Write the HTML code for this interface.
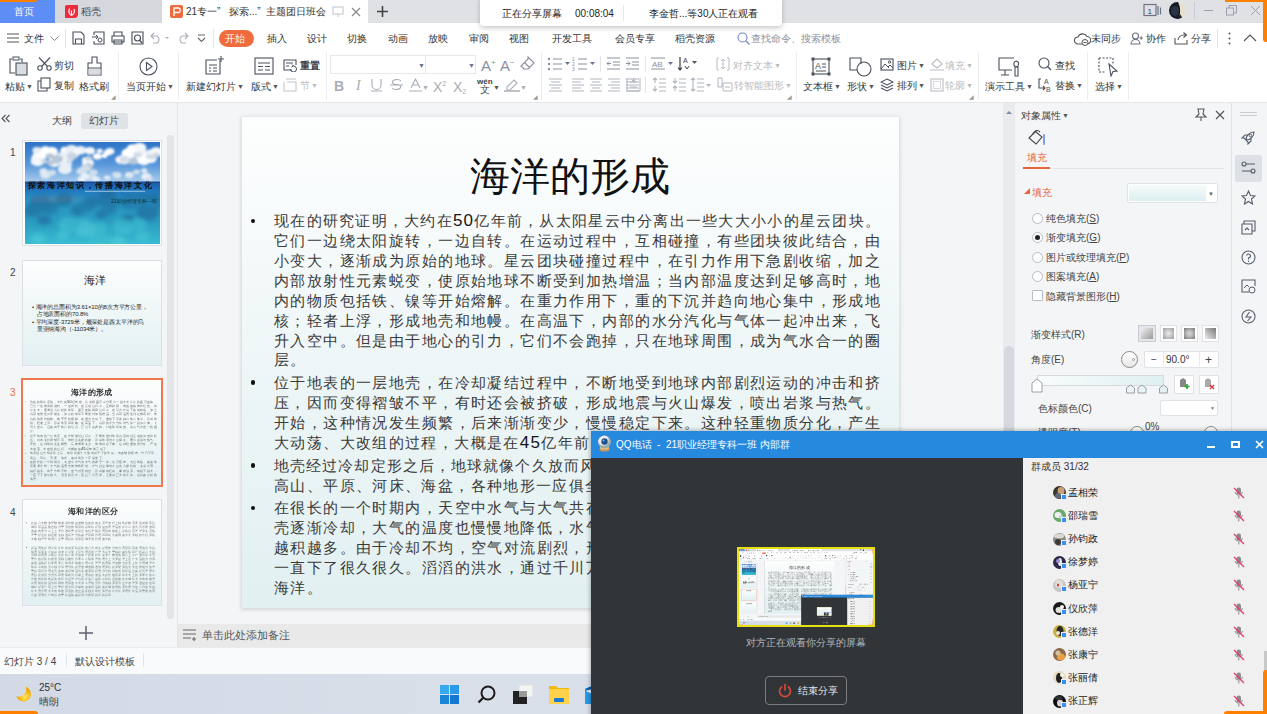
<!DOCTYPE html>
<html><head><meta charset="utf-8">
<style>
*{box-sizing:border-box;margin:0;padding:0}
html,body{width:1267px;height:714px;overflow:hidden;background:#f4f5f7;font-family:"Liberation Sans",sans-serif;color:#333}
.a{position:absolute}
.t{position:absolute;white-space:nowrap;line-height:1;font-size:10px;margin-top:1px}
.sl{margin-top:0;letter-spacing:1.1px}
.dg{font-family:'Liberation Sans',sans-serif;font-size:17px;color:#151515}
.ic{position:absolute}
.sep{position:absolute;width:1px;background:#e3e5e8}
.dd{font-size:7px;color:#555;margin-left:1px;vertical-align:1px}
.gr{color:#b9bcc2}
</style></head><body>

<!-- ===== TITLE BAR ===== -->
<div class="a" style="left:0;top:0;width:1267px;height:23px;background:#dfe1e5"></div>
<div class="a" style="left:0;top:0;width:55px;height:23px;background:#5c8ef5"></div>
<div class="t" style="left:14px;top:6px;color:#fff">首页</div>
<div class="a" style="left:55px;top:0;width:107px;height:23px;background:#d6d8dd"></div>
<svg class="ic" style="left:65px;top:5px" width="13" height="13"><path d="M2 0H13V9A4 4 0 0 1 9 13H0V2A2 2 0 0 1 2 0Z" fill="#ee2a3c"/><path d="M6.5 10.5C4 9 3.5 6 4.5 3.5M6.5 10.5C9 9 10 6.5 9 4M6.5 10.5V5.5" fill="none" stroke="#fff" stroke-width="1.1"/></svg>
<div class="t" style="left:81px;top:6px;color:#444">稻壳</div>
<div class="a" style="left:162px;top:0;width:206px;height:23px;background:#fff"></div>
<svg class="ic" style="left:170px;top:5px" width="13" height="13"><rect width="13" height="13" rx="2" fill="#ec6a3d"/><path d="M4 11V3H8.5A2.3 2.3 0 0 1 8.5 7.5H4" fill="none" stroke="#fff" stroke-width="1.3"/></svg>
<div class="t" style="left:186px;top:6px;color:#333">21专一”</div><div class="t" style="left:229px;top:6px;color:#333">探索...”</div><div class="t" style="left:266px;top:6px;color:#333">主题团日班会</div>
<svg class="ic" style="left:332px;top:6px" width="12" height="12"><rect x="1" y="1" width="10" height="7" fill="none" stroke="#c8ccd2" stroke-width="1.2"/><line x1="6" y1="8" x2="6" y2="11" stroke="#c8ccd2"/></svg>
<svg class="ic" style="left:351px;top:7px" width="10" height="10"><path d="M1 1L9 9M9 1L1 9" stroke="#888" stroke-width="1.1"/></svg>
<svg class="ic" style="left:376px;top:5px" width="13" height="13"><path d="M6.5 1V12M1 6.5H12" stroke="#444" stroke-width="1.6"/></svg>

<!-- title bar right -->
<svg class="ic" style="left:1143px;top:3px" width="19" height="14"><rect x="1" y="1.5" width="12" height="11" fill="none" stroke="#6b7385" stroke-width="1.2"/><path d="M15 3v9M17.5 4.5v7" stroke="#6b7385" stroke-width="1.2"/><text x="4.5" y="10.5" font-size="8" fill="#3d4557" font-family="Liberation Sans">1</text></svg>
<svg class="ic" style="left:1169px;top:2px" width="17" height="17"><defs><clipPath id="avc"><circle cx="8.5" cy="8.5" r="8.5"/></clipPath></defs><g clip-path="url(#avc)"><rect width="17" height="17" fill="#e6e2cc"/><path d="M0 0H9C11 4 12 9 10 17H0Z" fill="#141a26"/><ellipse cx="6" cy="9" rx="4" ry="5" fill="#2a3444"/><path d="M11 12L14 17H9Z" fill="#1a1f2a"/></g></svg>
<div class="sep" style="left:1194px;top:2px;height:17px;background:#c9ccd3"></div>
<div class="a" style="left:1204px;top:10px;width:9px;height:1px;background:#9aa1ad"></div>
<svg class="ic" style="left:1226px;top:5px" width="11" height="11"><rect x="0.5" y="3" width="7" height="7" fill="none" stroke="#9aa1ad"/><path d="M3 3V0.5H10.5V8H8" fill="none" stroke="#9aa1ad"/></svg>
<svg class="ic" style="left:1250px;top:5px" width="11" height="11"><path d="M1 1L10 10M10 1L1 10" stroke="#9aa1ad" stroke-width="1"/></svg>

<!-- ===== MENU ROW ===== -->
<div class="a" style="left:0;top:23px;width:1267px;height:80px;background:#fff"></div>
<div class="a" style="left:0;top:102px;width:1267px;height:1px;background:#e4e6ea"></div>
<svg class="ic" style="left:7px;top:33px" width="12" height="10"><path d="M0 1H12M0 5H12M0 9H12" stroke="#555" stroke-width="1.1"/></svg>
<div class="t" style="left:24px;top:33px;color:#333">文件</div>
<svg class="ic" style="left:50px;top:36px" width="9" height="6"><path d="M0.5 0.5L4.5 4.5L8.5 0.5" fill="none" stroke="#888"/></svg>
<div class="sep" style="left:65px;top:29px;height:19px"></div>
<svg class="ic" style="left:72px;top:31px" width="13" height="14"><path d="M1 1H9L12 4V13H1Z M3.5 13V8H9.5V13" fill="none" stroke="#474d59" stroke-width="1.1"/></svg>
<svg class="ic" style="left:92px;top:31px" width="13" height="14"><path d="M2 1H12V13H2V10M2 4V1" fill="none" stroke="#474d59" stroke-width="1.1"/><path d="M0 6H6M4 4L6 6L4 8" fill="none" stroke="#474d59"/><circle cx="8" cy="9" r="2" fill="none" stroke="#474d59"/></svg>
<svg class="ic" style="left:111px;top:31px" width="14" height="14"><path d="M3 5V1H11V5M1 5H13V11H1Z M3 9H11V13H3Z" fill="none" stroke="#474d59" stroke-width="1.1"/></svg>
<svg class="ic" style="left:131px;top:31px" width="13" height="14"><path d="M1 1H12V13H1Z" fill="none" stroke="#474d59" stroke-width="1.1"/><circle cx="6.5" cy="7" r="3" fill="none" stroke="#474d59" stroke-width="1.1"/><path d="M8.5 9L11 12" stroke="#474d59" stroke-width="1.2"/></svg>
<svg class="ic" style="left:150px;top:32px" width="20" height="12"><path d="M4 1L1 4L4 7M1 4H7A4 4 0 0 1 7 11H3" fill="none" stroke="#aab0ba" stroke-width="1.1"/><path d="M15 5L17 7L19 5Z" fill="#aab0ba"/></svg>
<svg class="ic" style="left:177px;top:32px" width="12" height="12"><path d="M8 1L11 4L8 7M11 4H5A4 4 0 0 0 5 11H9" fill="none" stroke="#aab0ba" stroke-width="1.1"/></svg>
<svg class="ic" style="left:197px;top:34px" width="9" height="9"><path d="M1 1H8M1 4L4.5 7.5L8 4" fill="none" stroke="#666" stroke-width="1.1"/></svg>
<div class="sep" style="left:213px;top:29px;height:19px"></div>
<div class="a" style="left:219px;top:30px;width:35px;height:17px;border-radius:9px;background:#f06c3c"></div>
<div class="t" style="left:225px;top:33px;color:#fff">开始</div>
<div class="t" style="left:267px;top:33px">插入</div>
<div class="t" style="left:307px;top:33px">设计</div>
<div class="t" style="left:347px;top:33px">切换</div>
<div class="t" style="left:388px;top:33px">动画</div>
<div class="t" style="left:428px;top:33px">放映</div>
<div class="t" style="left:469px;top:33px">审阅</div>
<div class="t" style="left:509px;top:33px">视图</div>
<div class="t" style="left:552px;top:33px">开发工具</div>
<div class="t" style="left:615px;top:33px">会员专享</div>
<div class="t" style="left:675px;top:33px">稻壳资源</div>
<svg class="ic" style="left:737px;top:32px" width="13" height="13"><circle cx="5.5" cy="5.5" r="4.5" fill="none" stroke="#6f86c6" stroke-width="1.1"/><path d="M9 9L12.5 12.5" stroke="#6f86c6" stroke-width="1.2"/></svg>
<div class="t" style="left:751px;top:33px;color:#8a90a0">查找命令、搜索模板</div>
<svg class="ic" style="left:1074px;top:32px" width="17" height="14"><path d="M4 12A3.5 3.5 0 0 1 4 5A5 5 0 0 1 13 4.5A3.5 3.5 0 0 1 13 12Z" fill="none" stroke="#555" stroke-width="1.1"/><circle cx="11" cy="10.5" r="3" fill="#fff" stroke="#555"/><path d="M9.5 10.5H12.5" stroke="#555"/></svg>
<div class="t" style="left:1091px;top:33px">未同步</div>
<svg class="ic" style="left:1130px;top:32px" width="13" height="13"><circle cx="5.5" cy="4" r="3" fill="none" stroke="#6a7080" stroke-width="1.1"/><path d="M1 12A4.5 4.5 0 0 1 10 12Z" fill="none" stroke="#6a7080" stroke-width="1.1"/><path d="M9.5 6H13M11.2 4.2V7.8" stroke="#6a7080"/></svg>
<div class="t" style="left:1146px;top:33px">协作</div>
<svg class="ic" style="left:1174px;top:31px" width="14" height="14"><path d="M1 7V13H13V9M4 9A6 6 0 0 1 10 4H12M9.5 1.5L12.5 4L9.5 6.5" fill="none" stroke="#555" stroke-width="1.1"/></svg>
<div class="t" style="left:1191px;top:33px">分享</div>
<div class="sep" style="left:1217px;top:29px;height:19px"></div>
<svg class="ic" style="left:1228px;top:32px" width="3" height="14"><circle cx="1.5" cy="1.5" r="1" fill="#555"/><circle cx="1.5" cy="6.5" r="1" fill="#555"/><circle cx="1.5" cy="11.5" r="1" fill="#555"/></svg>
<svg class="ic" style="left:1243px;top:34px" width="14" height="8"><path d="M1 7L7 1L13 7" fill="none" stroke="#555" stroke-width="1.1"/></svg>

<!-- sharing notice -->
<div class="a" style="left:480px;top:-4px;width:302px;height:30px;background:#fff;border-radius:4px;box-shadow:0 2px 5px rgba(0,0,0,.22)"></div>
<div class="t" style="left:502px;top:8px;color:#222">正在分享屏幕</div>
<div class="t" style="left:575px;top:8px;color:#222;font-size:10px">00:08:04</div>
<div class="sep" style="left:623px;top:5px;height:16px;background:#e8e8e8"></div>
<div class="t" style="left:649px;top:8px;color:#222">李金哲...等30人正在观看</div>

<!-- ===== RIBBON ===== -->
<svg class="ic" style="left:8px;top:56px" width="21" height="21"><path d="M4 3H2V17H7M12 3H14V6" fill="none" stroke="#4a505c" stroke-width="1.1"/><rect x="5" y="1" width="6" height="3" fill="none" stroke="#4a505c"/><rect x="8" y="7" width="11" height="12" fill="#d9dce1" stroke="#4a505c" stroke-width="1.1"/></svg>
<div class="t" style="left:5px;top:81px">粘贴<span class="dd">▼</span></div>
<svg class="ic" style="left:37px;top:57px" width="15" height="14"><circle cx="3" cy="11" r="2.2" fill="none" stroke="#4a505c" stroke-width="1.1"/><circle cx="12" cy="11" r="2.2" fill="none" stroke="#4a505c" stroke-width="1.1"/><path d="M4.5 9.5L13 0.5M10.5 9.5L2 0.5" stroke="#4a505c" stroke-width="1.1"/></svg>
<div class="t" style="left:54px;top:60px">剪切</div>
<svg class="ic" style="left:37px;top:77px" width="14" height="15"><rect x="4" y="1" width="9" height="10" fill="none" stroke="#4a505c" stroke-width="1.1"/><path d="M4 4H1V14H10V11" fill="none" stroke="#4a505c" stroke-width="1.1"/></svg>
<div class="t" style="left:54px;top:80px">复制</div>
<svg class="ic" style="left:86px;top:56px" width="17" height="21"><path d="M6 1H11V7H15V19H2V7H6Z" fill="none" stroke="#4a505c" stroke-width="1.1"/><rect x="2.5" y="13" width="12" height="5.5" fill="#d9dce1"/><path d="M2 12H15" stroke="#4a505c"/></svg>
<div class="t" style="left:79px;top:81px">格式刷</div>
<div class="t" style="left:111px;top:93px;font-size:6px;color:#999">◢</div>
<div class="sep" style="left:118px;top:52px;height:48px;background:#eceef1"></div>
<svg class="ic" style="left:139px;top:57px" width="19" height="19"><circle cx="9.5" cy="9.5" r="8.5" fill="none" stroke="#4a505c" stroke-width="1.1"/><path d="M7.5 5.5L13 9.5L7.5 13.5Z" fill="none" stroke="#4a505c" stroke-width="1.1"/></svg>
<div class="t" style="left:126px;top:81px">当页开始<span class="dd">▼</span></div>
<div class="sep" style="left:178px;top:52px;height:48px;background:#eceef1"></div>
<svg class="ic" style="left:204px;top:56px" width="21" height="20"><path d="M16 4V18H2V4H13" fill="none" stroke="#4a505c" stroke-width="1.1"/><path d="M17 0V6M14 3H20" stroke="#4a505c" stroke-width="1.1"/><path d="M5 9H13M5 12H7M9 12H13M5 15H7M9 15H13" stroke="#4a505c" stroke-width="1.1"/></svg>
<div class="t" style="left:186px;top:81px">新建幻灯片<span class="dd">▼</span></div>
<svg class="ic" style="left:254px;top:57px" width="20" height="18"><rect x="1" y="1" width="18" height="16" fill="none" stroke="#4a505c" stroke-width="1.1"/><path d="M4 6H16M4 9.5H9M11 9.5H16M4 13H9M11 13H16" stroke="#4a505c" stroke-width="1.1"/></svg>
<div class="t" style="left:251px;top:81px">版式<span class="dd">▼</span></div>
<svg class="ic" style="left:283px;top:59px" width="15" height="13"><path d="M9 11H1V1H13V6" fill="none" stroke="#4a505c" stroke-width="1.1"/><path d="M3 4H10M3 7H6" stroke="#4a505c"/><path d="M7.5 10A3 3 0 1 0 10.5 7M9 5.5L10.5 7L8.5 8" fill="none" stroke="#4a505c"/></svg>
<div class="t" style="left:300px;top:60px;font-weight:bold;color:#3a3f4a">重置</div>
<svg class="ic" style="left:283px;top:78px" width="15" height="14"><path d="M3 1H13M1 4V13H13V4H4" fill="none" stroke="#c0c4cb" stroke-width="1.1"/></svg>
<div class="t gr" style="left:300px;top:80px">节<span class="dd" style="color:#bbb">▼</span></div>
<div class="sep" style="left:326px;top:52px;height:48px;background:#eceef1"></div>
<div class="a" style="left:330px;top:55px;width:146px;height:19px;border:1px solid #e6e8eb;background:#fff"></div>
<div class="sep" style="left:425px;top:56px;height:17px;background:#e6e8eb"></div>
<div class="t" style="left:418px;top:61px;font-size:7px;color:#6a7390">▼</div>
<div class="t" style="left:468px;top:61px;font-size:7px;color:#6a7390">▼</div>
<div class="t" style="left:481px;top:57px;font-size:15px;color:#8a909c;font-weight:normal">A<span style="font-size:8px;vertical-align:6px">+</span></div>
<div class="t" style="left:500px;top:57px;font-size:15px;color:#8a909c">A<span style="font-size:8px;vertical-align:6px">−</span></div>
<svg class="ic" style="left:520px;top:56px" width="15" height="15"><path d="M8 1L14 7L8 13H4L1 10L8 3Z M4.5 6.5L10 12" fill="none" stroke="#8a909c" stroke-width="1.1"/></svg>
<div class="t" style="left:334px;top:78px;font-size:14px;font-weight:bold;color:#a8adb6">B</div>
<div class="t" style="left:356px;top:78px;font-size:14px;font-style:italic;color:#a8adb6;font-family:'Liberation Serif',serif">I</div>
<svg class="ic" style="left:370px;top:78px" width="13" height="14"><path d="M2 1V7A4.5 4.5 0 0 0 11 7V1M1 13H12" fill="none" stroke="#a8adb6" stroke-width="1.1"/></svg>
<svg class="ic" style="left:390px;top:78px" width="13" height="14"><path d="M11 3A4.5 2.5 0 1 0 6.5 6.5A4.5 2.5 0 1 1 2 10M0 7H13" fill="none" stroke="#a8adb6" stroke-width="1.1"/></svg>
<svg class="ic" style="left:409px;top:78px" width="13" height="14"><path d="M2 10L6.5 1L11 10M3.5 7H9.5M0 13H13" fill="none" stroke="#a8adb6" stroke-width="1.1"/></svg>
<div class="t" style="left:422px;top:83px;font-size:7px;color:#a8adb6">▼</div>
<div class="t" style="left:433px;top:79px;font-size:14px;color:#a8adb6">X<span style="font-size:7px;vertical-align:6px">2</span></div>
<div class="t" style="left:453px;top:79px;font-size:14px;color:#a8adb6">X<span style="font-size:7px;vertical-align:-2px">2</span></div>
<div class="t" style="left:477px;top:77px;font-size:8px;color:#3a3f4a;font-weight:bold">wén</div>
<div class="t" style="left:480px;top:84px;font-size:10px;color:#3a3f4a">文</div>
<div class="t" style="left:493px;top:83px;font-size:7px;color:#555">▼</div>
<svg class="ic" style="left:504px;top:78px" width="16" height="14"><path d="M3 9L10 2L13 5L6 12H3Z" fill="none" stroke="#a8adb6" stroke-width="1.1"/><path d="M0 13H16" stroke="#a8adb6" stroke-width="1.5"/></svg>
<div class="t" style="left:520px;top:83px;font-size:7px;color:#a8adb6">▼</div>
<div class="t" style="left:533px;top:93px;font-size:6px;color:#999">◢</div>
<div class="sep" style="left:541px;top:52px;height:48px;background:#eceef1"></div>
<svg class="ic" style="left:547px;top:57px" width="24" height="14"><g fill="#8a909c"><circle cx="2" cy="2" r="1.2"/><circle cx="2" cy="7" r="1.2"/><circle cx="2" cy="12" r="1.2"/></g><path d="M6 2H15M6 7H15M6 12H15" stroke="#8a909c" stroke-width="1.1"/><path d="M18 5L20.5 8L23 5Z" fill="#6a7390"/></svg>
<svg class="ic" style="left:572px;top:56px" width="24" height="15"><text x="0" y="5" font-size="5" fill="#8a909c">1</text><text x="0" y="10" font-size="5" fill="#8a909c">2</text><text x="0" y="15" font-size="5" fill="#8a909c">3</text><path d="M6 3H15M6 8H15M6 13H15" stroke="#8a909c" stroke-width="1.1"/><path d="M18 6L20.5 9L23 6Z" fill="#6a7390"/></svg>
<div class="sep" style="left:600px;top:56px;height:16px"></div>
<svg class="ic" style="left:606px;top:57px" width="15" height="13"><path d="M1 1H14M7 5H14M7 8H14M1 12H14M5 6.5H1M3 4.5L1 6.5L3 8.5" fill="none" stroke="#8a909c" stroke-width="1"/></svg>
<svg class="ic" style="left:625px;top:57px" width="15" height="13"><path d="M1 1H14M7 5H14M7 8H14M1 12H14M1 6.5H5M3 4.5L5 6.5L3 8.5" fill="none" stroke="#8a909c" stroke-width="1"/></svg>
<div class="sep" style="left:645px;top:56px;height:16px"></div>
<svg class="ic" style="left:651px;top:57px" width="24" height="13"><path d="M0 1H14M0 12H14" stroke="#8a909c"/><text x="1" y="10" font-size="8" fill="#8a909c" font-family="Liberation Sans">AB</text><path d="M17 5L19.5 8L22 5Z" fill="#6a7390"/></svg>
<svg class="ic" style="left:677px;top:56px" width="22" height="15"><path d="M3 1V14M1 11.5L3 14L5 11.5" fill="none" stroke="#3a3f4a" stroke-width="1.2"/><text x="6" y="7" font-size="7" fill="#3a3f4a" font-family="Liberation Sans">A</text><path d="M8 10L10 13L12 10" fill="none" stroke="#3a3f4a"/><path d="M15 5L17.5 8L20 5Z" fill="#555"/></svg>
<svg class="ic" style="left:716px;top:57px" width="14" height="14"><path d="M3 1H1V13H3M11 1H13V13H11M7 2V12M5 4L7 2L9 4M5 10L7 12L9 10" fill="none" stroke="#b9bcc2" stroke-width="1"/></svg>
<div class="t gr" style="left:733px;top:60px">对齐文本<span class="dd" style="color:#bbb">▼</span></div>
<svg class="ic" style="left:548px;top:77px" width="100" height="15"><g stroke="#b0b5bd" stroke-width="1.1"><path d="M1 2H14M3 5H12M1 8H14M3 11H12M1 14H14"/><path d="M24 2H36M24 5H33M24 8H36M24 11H33M24 14H36"/><path d="M42 2H54M44 5H52M42 8H54M44 11H52M42 14H54"/><path d="M60 2H72M63 5H72M60 8H72M63 11H72M60 14H72"/><path d="M78 2H91M78 5H91M78 8H91M78 11H91M78 14H91"/></g></svg>
<svg class="ic" style="left:626px;top:77px" width="15" height="15"><path d="M1 1V14M14 1V14M1 14H14M4 5H11M4 10H11M7.5 1V4M5.5 2.5L7.5 4.5L9.5 2.5" fill="none" stroke="#b0b5bd" stroke-width="1"/></svg>
<div class="sep" style="left:645px;top:77px;height:16px"></div>
<svg class="ic" style="left:652px;top:77px" width="60" height="15"><g stroke="#b0b5bd" stroke-width="1.1" fill="none"><path d="M7 2H14M7 6H14M7 10H14M7 14H14M3 1V6M1 3L3 1L5 3M3 9V14M1 12L3 14L5 12"/><path d="M27 2H34M27 6H34M27 10H34M27 14H34M23 1V6M21 4L23 6L25 4M23 9V14M21 11L23 9L25 11"/><path d="M45 2H52M45 6H52M45 10H52M45 14H52M41 1V14M39 3L41 1L43 3M39 12L41 14L43 12"/></g><path d="M54 7L56.5 10L59 7Z" fill="#b0b5bd"/></svg>
<svg class="ic" style="left:717px;top:77px" width="16" height="15"><path d="M1 1H5V10H1Z" fill="none" stroke="#b0b5bd"/><rect x="6" y="6" width="9" height="8" rx="1" fill="none" stroke="#b0b5bd"/><path d="M8 10H13" stroke="#b0b5bd"/></svg>
<div class="t gr" style="left:734px;top:80px">转智能图形<span class="dd" style="color:#bbb">▼</span></div>
<div class="t" style="left:787px;top:93px;font-size:6px;color:#999">◢</div>
<div class="sep" style="left:796px;top:52px;height:48px;background:#eceef1"></div>
<svg class="ic" style="left:811px;top:57px" width="20" height="19"><rect x="2" y="2" width="16" height="15" fill="none" stroke="#4a505c" stroke-width="1.1"/><g fill="#4a505c"><rect x="0.5" y="0.5" width="3" height="3"/><rect x="16.5" y="0.5" width="3" height="3"/><rect x="0.5" y="15.5" width="3" height="3"/><rect x="16.5" y="15.5" width="3" height="3"/></g><text x="4" y="12" font-size="9" fill="#4a505c" font-family="Liberation Sans">A</text><path d="M11 7H15M11 10H15M5 14H15" stroke="#4a505c"/></svg>
<div class="t" style="left:803px;top:81px">文本框<span class="dd">▼</span></div>
<svg class="ic" style="left:849px;top:57px" width="23" height="20"><path d="M12 7V1H1V13H8" fill="none" stroke="#4a505c" stroke-width="1.1"/><circle cx="15" cy="12" r="7" fill="none" stroke="#4a505c" stroke-width="1.1"/></svg>
<div class="t" style="left:847px;top:81px">形状<span class="dd">▼</span></div>
<svg class="ic" style="left:880px;top:58px" width="14" height="13"><rect x="1" y="1" width="12" height="11" fill="none" stroke="#4a505c" stroke-width="1.1"/><path d="M1 11L5 6L9 10M8 9L10 7L13 10" fill="none" stroke="#4a505c"/><circle cx="9.5" cy="4" r="1.2" fill="none" stroke="#4a505c"/></svg>
<div class="t" style="left:897px;top:60px">图片<span class="dd">▼</span></div>
<svg class="ic" style="left:930px;top:57px" width="14" height="14"><path d="M2 7L7 2L12 7L7 11Z M0 13H14" fill="none" stroke="#b9bcc2" stroke-width="1.1"/></svg>
<div class="t gr" style="left:945px;top:60px">填充<span class="dd" style="color:#bbb">▼</span></div>
<svg class="ic" style="left:880px;top:78px" width="14" height="14"><path d="M7 1L13 4L7 7L1 4Z M1 7L7 10L13 7M1 10L7 13L13 10" fill="none" stroke="#4a505c" stroke-width="1.1"/></svg>
<div class="t" style="left:897px;top:80px">排列<span class="dd">▼</span></div>
<svg class="ic" style="left:930px;top:78px" width="14" height="14"><rect x="1" y="1" width="12" height="12" fill="none" stroke="#b9bcc2" stroke-width="1.1"/><rect x="3.5" y="3.5" width="7" height="7" fill="none" stroke="#d6d8dc"/></svg>
<div class="t gr" style="left:945px;top:80px">轮廓<span class="dd" style="color:#bbb">▼</span></div>
<div class="t" style="left:969px;top:93px;font-size:6px;color:#999">◢</div>
<div class="sep" style="left:978px;top:52px;height:48px;background:#eceef1"></div>
<svg class="ic" style="left:998px;top:57px" width="23" height="20"><path d="M16 1H1V13H14M7 13V18M3 18H11" fill="none" stroke="#4a505c" stroke-width="1.1"/><path d="M18 4A3 3 0 0 0 20 10V19H17V10A3 3 0 0 0 18 4" fill="none" stroke="#4a505c" stroke-width="1.1"/></svg>
<div class="t" style="left:985px;top:81px">演示工具<span class="dd">▼</span></div>
<svg class="ic" style="left:1038px;top:57px" width="14" height="14"><circle cx="6" cy="6" r="5" fill="none" stroke="#4a505c" stroke-width="1.1"/><path d="M9.5 9.5L13 13" stroke="#4a505c" stroke-width="1.3"/></svg>
<div class="t" style="left:1055px;top:60px">查找</div>
<svg class="ic" style="left:1038px;top:77px" width="15" height="15"><path d="M3 2H1V11H7M5 9L7 11L5 13" fill="none" stroke="#4a505c" stroke-width="1.1"/><text x="6" y="7" font-size="7" fill="#4a505c" font-family="Liberation Sans">A</text><text x="8" y="14.5" font-size="7" fill="#4a505c" font-family="Liberation Sans">B</text></svg>
<div class="t" style="left:1055px;top:80px">替换<span class="dd">▼</span></div>
<div class="sep" style="left:1087px;top:52px;height:48px;background:#eceef1"></div>
<svg class="ic" style="left:1098px;top:57px" width="21" height="20"><path d="M1 1H15V8M1 1V15H8" fill="none" stroke="#4a505c" stroke-width="1.1" stroke-dasharray="2 1.5"/><path d="M11 7L19 14L15 14.5L13 19Z" fill="none" stroke="#4a505c" stroke-width="1.1"/></svg>
<div class="t" style="left:1095px;top:81px">选择<span class="dd">▼</span></div>
<div class="sep" style="left:1128px;top:52px;height:48px;background:#eceef1"></div>

<!-- ===== LEFT PANEL ===== -->
<div class="a" style="left:177px;top:103px;width:1px;height:544px;background:#e2e4e8"></div>
<svg class="ic" style="left:1px;top:114px" width="10" height="9"><path d="M4.5 1L1 4.5L4.5 8M8.5 1L5 4.5L8.5 8" fill="none" stroke="#555" stroke-width="1.1"/></svg>
<div class="t" style="left:52px;top:115px;color:#444">大纲</div>
<div class="a" style="left:81px;top:113px;width:47px;height:16px;border-radius:3px;background:#dfe2e7"></div>
<div class="t" style="left:89px;top:115px;color:#444">幻灯片</div>
<div class="a" style="left:167px;top:135px;width:7px;height:484px;border-radius:3px;background:#e2e4e8"></div>

<div class="t" style="left:10px;top:147px;font-size:10px;color:#444">1</div>
<div class="a" style="left:22px;top:140px;width:140px;height:106px;border:1px solid #dcdfe3;background:#fff"></div>
<svg class="ic" style="left:25px;top:142px" width="135" height="102" viewBox="0 0 135 102">
<defs>
<linearGradient id="sky" x1="0" y1="0" x2="0" y2="1"><stop offset="0" stop-color="#2c74c8"/><stop offset=".55" stop-color="#5696da"/><stop offset="1" stop-color="#a8cbec"/></linearGradient>
<linearGradient id="sea" x1="0" y1="0" x2="0" y2="1"><stop offset="0" stop-color="#1a58a8"/><stop offset=".12" stop-color="#2174bc"/><stop offset=".3" stop-color="#2a98c8"/><stop offset=".65" stop-color="#2a9cc0"/><stop offset="1" stop-color="#38bcd2"/></linearGradient>
<filter id="b1" x="-30%" y="-30%" width="160%" height="160%"><feGaussianBlur stdDeviation="1.1"/></filter>
<filter id="b2" x="-30%" y="-30%" width="160%" height="160%"><feGaussianBlur stdDeviation="2.2"/></filter>
</defs>
<rect width="135" height="40" fill="url(#sky)"/>
<g filter="url(#b1)"><ellipse cx="26.8" cy="9.6" rx="6.2" ry="4.5" fill="#ffffff"/><ellipse cx="55.6" cy="8.3" rx="5.9" ry="4.2" fill="#e9eff7"/><ellipse cx="20.5" cy="8.1" rx="5.3" ry="3.8" fill="#ffffff"/><ellipse cx="13.3" cy="16.2" rx="7.0" ry="5.0" fill="#ffffff"/><ellipse cx="63.0" cy="21.1" rx="5.9" ry="4.2" fill="#ffffff"/><ellipse cx="41.5" cy="15.5" rx="7.6" ry="5.4" fill="#ffffff"/><ellipse cx="40.3" cy="9.2" rx="5.3" ry="3.8" fill="#e9eff7"/><ellipse cx="14.8" cy="13.4" rx="6.9" ry="4.9" fill="#ffffff"/><ellipse cx="14.0" cy="19.7" rx="4.3" ry="3.1" fill="#ffffff"/><ellipse cx="39.8" cy="7.5" rx="3.8" ry="2.7" fill="#ffffff"/><ellipse cx="36.8" cy="18.8" rx="6.8" ry="4.8" fill="#f4f7fb"/><ellipse cx="42.0" cy="16.9" rx="4.8" ry="3.4" fill="#ffffff"/><ellipse cx="48.5" cy="11.9" rx="5.9" ry="4.2" fill="#e9eff7"/><ellipse cx="36.7" cy="14.2" rx="5.4" ry="3.8" fill="#e9eff7"/><ellipse cx="64.9" cy="8.8" rx="5.3" ry="3.8" fill="#f4f7fb"/><ellipse cx="16.8" cy="17.7" rx="3.7" ry="2.6" fill="#e9eff7"/><ellipse cx="12.5" cy="19.4" rx="6.8" ry="4.9" fill="#f4f7fb"/><ellipse cx="27.7" cy="14.4" rx="5.6" ry="4.0" fill="#f4f7fb"/><ellipse cx="12.0" cy="8.2" rx="4.6" ry="3.3" fill="#e9eff7"/><ellipse cx="46.5" cy="7.5" rx="6.4" ry="4.6" fill="#e9eff7"/><ellipse cx="41.5" cy="22.3" rx="5.4" ry="3.8" fill="#e9eff7"/><ellipse cx="30.4" cy="22.0" rx="3.6" ry="2.6" fill="#f4f7fb"/><ellipse cx="28.6" cy="20.7" rx="5.6" ry="4.0" fill="#ffffff"/><ellipse cx="52.6" cy="9.1" rx="4.5" ry="3.2" fill="#f4f7fb"/><ellipse cx="61.2" cy="17.9" rx="4.2" ry="3.0" fill="#f4f7fb"/><ellipse cx="39.9" cy="27.2" rx="6.9" ry="5.0" fill="#e9eff7"/><ellipse cx="25.6" cy="20.6" rx="3.8" ry="2.7" fill="#b8c6d8"/><ellipse cx="63.6" cy="16.4" rx="3.3" ry="2.4" fill="#c8d4e2"/><ellipse cx="46.9" cy="14.2" rx="5.1" ry="3.7" fill="#c8d4e2"/><ellipse cx="24.7" cy="14.1" rx="4.0" ry="2.8" fill="#b8c6d8"/><ellipse cx="44.1" cy="19.1" rx="3.2" ry="2.3" fill="#d4dde8"/><ellipse cx="63.2" cy="24.5" rx="4.9" ry="3.5" fill="#b8c6d8"/><ellipse cx="60.4" cy="26.5" rx="5.2" ry="3.7" fill="#d4dde8"/><ellipse cx="32.0" cy="20.4" rx="3.1" ry="2.2" fill="#d4dde8"/><ellipse cx="32.4" cy="17.0" rx="5.6" ry="4.0" fill="#b8c6d8"/><ellipse cx="19.1" cy="19.4" rx="2.9" ry="2.1" fill="#c8d4e2"/><ellipse cx="116.5" cy="11.7" rx="6.8" ry="4.9" fill="#e9eff7"/><ellipse cx="96.0" cy="17.7" rx="5.6" ry="4.0" fill="#ffffff"/><ellipse cx="119.1" cy="19.2" rx="5.6" ry="4.0" fill="#f4f7fb"/><ellipse cx="99.7" cy="17.3" rx="7.0" ry="5.0" fill="#f4f7fb"/><ellipse cx="113.3" cy="7.6" rx="4.0" ry="2.9" fill="#e9eff7"/><ellipse cx="108.0" cy="6.8" rx="6.4" ry="4.6" fill="#ffffff"/><ellipse cx="114.6" cy="5.7" rx="6.8" ry="4.9" fill="#f4f7fb"/><ellipse cx="100.6" cy="11.8" rx="3.6" ry="2.6" fill="#e9eff7"/><ellipse cx="106.3" cy="13.6" rx="3.8" ry="2.7" fill="#f4f7fb"/><ellipse cx="114.7" cy="18.3" rx="4.7" ry="3.4" fill="#ffffff"/><ellipse cx="115.2" cy="16.0" rx="4.7" ry="3.3" fill="#ffffff"/><ellipse cx="118.3" cy="16.2" rx="6.2" ry="4.4" fill="#ffffff"/><ellipse cx="125.6" cy="16.7" rx="6.1" ry="4.3" fill="#ffffff"/><ellipse cx="102.6" cy="10.9" rx="6.1" ry="4.3" fill="#ffffff"/><ellipse cx="125.0" cy="10.5" rx="4.2" ry="3.0" fill="#e9eff7"/><ellipse cx="131.3" cy="10.1" rx="6.8" ry="4.8" fill="#f4f7fb"/><ellipse cx="131.3" cy="13.1" rx="3.3" ry="2.3" fill="#c8d4e2"/><ellipse cx="113.4" cy="12.7" rx="3.8" ry="2.7" fill="#d4dde8"/><ellipse cx="127.1" cy="14.7" rx="4.2" ry="3.0" fill="#d4dde8"/><ellipse cx="99.1" cy="17.2" rx="4.7" ry="3.4" fill="#d4dde8"/><ellipse cx="123.8" cy="14.7" rx="3.2" ry="2.3" fill="#d4dde8"/><ellipse cx="108.3" cy="19.2" rx="4.8" ry="3.5" fill="#b8c6d8"/><ellipse cx="79.4" cy="13.9" rx="3.0" ry="2.1" fill="#ffffff"/><ellipse cx="74.7" cy="9.0" rx="3.1" ry="2.2" fill="#f4f7fb"/><ellipse cx="84.9" cy="9.2" rx="4.5" ry="3.2" fill="#f4f7fb"/><ellipse cx="82.5" cy="10.8" rx="4.0" ry="2.8" fill="#ffffff"/><ellipse cx="72.3" cy="14.4" rx="4.3" ry="3.1" fill="#ffffff"/><ellipse cx="71.1" cy="37.3" rx="4.0" ry="2.9" fill="#dfe9f4"/><ellipse cx="111.5" cy="30.1" rx="3.5" ry="2.5" fill="#cfdff0"/><ellipse cx="67.7" cy="35.6" rx="3.7" ry="2.7" fill="#e8f0f8"/><ellipse cx="56.6" cy="29.3" rx="5.3" ry="3.8" fill="#cfdff0"/><ellipse cx="121.2" cy="34.6" rx="5.1" ry="3.6" fill="#e8f0f8"/><ellipse cx="56.8" cy="37.2" rx="4.2" ry="3.0" fill="#e8f0f8"/><ellipse cx="20.5" cy="33.1" rx="5.2" ry="3.7" fill="#dfe9f4"/><ellipse cx="82.2" cy="35.8" rx="3.2" ry="2.3" fill="#dfe9f4"/><ellipse cx="63.9" cy="35.3" rx="4.4" ry="3.1" fill="#cfdff0"/><ellipse cx="92.1" cy="33.3" rx="4.2" ry="3.0" fill="#dfe9f4"/><ellipse cx="119.2" cy="28.6" rx="3.3" ry="2.4" fill="#dfe9f4"/><ellipse cx="104.3" cy="33.1" rx="4.4" ry="3.1" fill="#dfe9f4"/><ellipse cx="59.8" cy="34.1" rx="4.2" ry="3.0" fill="#e8f0f8"/><ellipse cx="26.9" cy="30.8" rx="4.2" ry="3.0" fill="#cfdff0"/><ellipse cx="68.5" cy="30.5" rx="4.3" ry="3.0" fill="#cfdff0"/><ellipse cx="124.6" cy="36.9" rx="3.4" ry="2.4" fill="#cfdff0"/><ellipse cx="18.5" cy="29.2" rx="4.0" ry="2.9" fill="#dfe9f4"/><ellipse cx="90.6" cy="32.3" rx="3.4" ry="2.4" fill="#cfdff0"/></g>
<rect y="40" width="135" height="62" fill="url(#sea)"/>
<rect y="39.5" width="135" height="1.5" fill="#1a4a92"/>
<g filter="url(#b2)" opacity=".55"><ellipse cx="103.0" cy="77.4" rx="6.7" ry="4.8" fill="#185a88"/><ellipse cx="85.4" cy="64.2" rx="7.4" ry="5.3" fill="#1a5f90"/><ellipse cx="125.9" cy="60.5" rx="12.3" ry="8.8" fill="#1f6a9a"/><ellipse cx="115.6" cy="59.1" rx="10.3" ry="7.3" fill="#1a5f90"/><ellipse cx="25.2" cy="65.8" rx="9.2" ry="6.6" fill="#1f6a9a"/><ellipse cx="57.7" cy="63.9" rx="6.2" ry="4.5" fill="#1f6a9a"/><ellipse cx="7.4" cy="68.9" rx="8.7" ry="6.2" fill="#1a5f90"/><ellipse cx="53.0" cy="67.9" rx="7.7" ry="5.5" fill="#1a5f90"/><ellipse cx="19.1" cy="78.0" rx="7.2" ry="5.1" fill="#1a5f90"/><ellipse cx="15.5" cy="61.8" rx="11.9" ry="8.5" fill="#1a5f90"/><ellipse cx="38.8" cy="58.2" rx="8.6" ry="6.1" fill="#185a88"/><ellipse cx="107.4" cy="61.5" rx="6.6" ry="4.7" fill="#185a88"/><ellipse cx="76.3" cy="72.5" rx="6.2" ry="4.4" fill="#1a5f90"/><ellipse cx="104.9" cy="59.6" rx="11.9" ry="8.5" fill="#1f6a9a"/><ellipse cx="122.3" cy="70.9" rx="11.2" ry="8.0" fill="#1a5f90"/><ellipse cx="81.0" cy="60.6" rx="7.5" ry="5.3" fill="#1a5f90"/><ellipse cx="61.7" cy="63.5" rx="9.5" ry="6.8" fill="#1f6a9a"/><ellipse cx="82.7" cy="56.1" rx="10.6" ry="7.5" fill="#1a5f90"/><ellipse cx="126.2" cy="61.5" rx="6.9" ry="4.9" fill="#1f6a9a"/><ellipse cx="83.6" cy="68.3" rx="7.0" ry="5.0" fill="#1f6a9a"/><ellipse cx="67.5" cy="59.4" rx="8.0" ry="5.7" fill="#1a5f90"/><ellipse cx="129.3" cy="55.9" rx="5.7" ry="4.1" fill="#185a88"/></g>
<g filter="url(#b2)" opacity=".6"><ellipse cx="74.4" cy="85.4" rx="8.3" ry="5.9" fill="#3fbfd2"/><ellipse cx="14.3" cy="96.7" rx="8.0" ry="5.7" fill="#3fbfd2"/><ellipse cx="73.7" cy="98.0" rx="11.0" ry="7.9" fill="#3fbfd2"/><ellipse cx="92.8" cy="99.7" rx="7.5" ry="5.4" fill="#52cedc"/><ellipse cx="98.4" cy="84.5" rx="11.1" ry="8.0" fill="#46c6d8"/><ellipse cx="113.0" cy="82.3" rx="9.1" ry="6.5" fill="#3fbfd2"/><ellipse cx="58.1" cy="83.0" rx="9.3" ry="6.7" fill="#3fbfd2"/><ellipse cx="117.5" cy="94.1" rx="7.2" ry="5.1" fill="#46c6d8"/><ellipse cx="93.5" cy="82.8" rx="6.6" ry="4.7" fill="#3fbfd2"/><ellipse cx="60.2" cy="86.7" rx="11.0" ry="7.8" fill="#52cedc"/><ellipse cx="43.7" cy="82.6" rx="10.5" ry="7.5" fill="#46c6d8"/><ellipse cx="48.1" cy="82.0" rx="7.7" ry="5.5" fill="#3fbfd2"/><ellipse cx="37.7" cy="93.8" rx="7.0" ry="5.0" fill="#46c6d8"/><ellipse cx="12.3" cy="96.7" rx="6.4" ry="4.6" fill="#52cedc"/></g>
<ellipse cx="30" cy="57" rx="28" ry="3" fill="#8a7a90" opacity=".3" filter="url(#b2)"/>
<path d="M60 49.3H120" stroke="#eef8fa" stroke-width=".8" opacity=".75"/>
<text x="2.5" y="46" font-size="8.3" font-weight="bold" fill="#101010" font-family="Liberation Serif,serif" letter-spacing="1.7">探索海洋知识，传播海洋文化</text>
<text x="86" y="61" font-size="5.2" fill="#0e2a30" font-family="Liberation Sans,sans-serif">21职业经理专科一班</text>
</svg>

<div class="t" style="left:10px;top:267px;font-size:10px;color:#444">2</div>
<div class="a" style="left:22px;top:260px;width:140px;height:106px;border:1px solid #dcdfe3;background:linear-gradient(#fcfdfd,#e2f0f1)"></div>
<div class="t" style="left:84px;top:274px;font-size:11px;color:#222">海洋</div>
<div class="a" style="left:32px;top:303.5px;font-size:6px;line-height:7.6px;color:#222;white-space:nowrap;letter-spacing:-.12px">• 海洋的总面积为3.61×10的8次方平方公里，<br>&nbsp;&nbsp;&nbsp;占地表面积的70.8%<br>• 平均深度-3729米，最深处是西太平洋的马<br>&nbsp;&nbsp;&nbsp;里亚纳海沟（-11034米）。</div>

<div class="t" style="left:10px;top:387px;font-size:10px;color:#e8703f">3</div>
<div class="a" style="left:21px;top:378px;width:142px;height:109px;border:2px solid #f07850;background:linear-gradient(#fcfdfd,#e2f0f1)"></div>

<div class="t" style="left:10px;top:507px;font-size:10px;color:#444">4</div>
<div class="a" style="left:22px;top:499px;width:140px;height:107px;border:1px solid #dcdfe3;background:linear-gradient(#fcfdfd,#e2f0f1)"></div>
<div class="a" style="left:23px;top:380px;width:657px;height:491px;transform-origin:0 0;transform:scale(0.2100);overflow:hidden">
<div class="t" style="left:228px;top:39px;font-size:40px;color:#222;font-weight:bold;font-family:'Liberation Serif',serif">海洋的形成</div>
<div class="a" style="left:8.5px;top:101.9px;width:4.4px;height:4.4px;border-radius:50%;background:#777"></div>
<div class="t sl" style="left:32px;top:94.1px;height:20px;line-height:20px;font-size:15.3px;color:#6a6a6a;font-family:'Liberation Serif',serif;width:607px;text-align:justify;text-align-last:justify;">现在的研究证明，大约在<span class=dg>50</span>亿年前，从太阳星云中分离出一些大大小小的星云团块。</div>
<div class="t sl" style="left:32px;top:114.0px;height:20px;line-height:20px;font-size:15.3px;color:#6a6a6a;font-family:'Liberation Serif',serif;width:607px;text-align:justify;text-align-last:justify;">它们一边绕太阳旋转，一边自转。在运动过程中，互相碰撞，有些团块彼此结合，由</div>
<div class="t sl" style="left:32px;top:133.9px;height:20px;line-height:20px;font-size:15.3px;color:#6a6a6a;font-family:'Liberation Serif',serif;width:607px;text-align:justify;text-align-last:justify;">小变大，逐渐成为原始的地球。星云团块碰撞过程中，在引力作用下急剧收缩，加之</div>
<div class="t sl" style="left:32px;top:153.8px;height:20px;line-height:20px;font-size:15.3px;color:#6a6a6a;font-family:'Liberation Serif',serif;width:607px;text-align:justify;text-align-last:justify;">内部放射性元素蜕变，使原始地球不断受到加热增温；当内部温度达到足够高时，地</div>
<div class="t sl" style="left:32px;top:173.7px;height:20px;line-height:20px;font-size:15.3px;color:#6a6a6a;font-family:'Liberation Serif',serif;width:607px;text-align:justify;text-align-last:justify;">内的物质包括铁、镍等开始熔解。在重力作用下，重的下沉并趋向地心集中，形成地</div>
<div class="t sl" style="left:32px;top:193.6px;height:20px;line-height:20px;font-size:15.3px;color:#6a6a6a;font-family:'Liberation Serif',serif;width:607px;text-align:justify;text-align-last:justify;">核；轻者上浮，形成地壳和地幔。在高温下，内部的水分汽化与气体一起冲出来，飞</div>
<div class="t sl" style="left:32px;top:213.5px;height:20px;line-height:20px;font-size:15.3px;color:#6a6a6a;font-family:'Liberation Serif',serif;width:607px;text-align:justify;text-align-last:justify;">升入空中。但是由于地心的引力，它们不会跑掉，只在地球周围，成为气水合一的圈</div>
<div class="t sl" style="left:32px;top:233.4px;height:20px;line-height:20px;font-size:15.3px;color:#6a6a6a;font-family:'Liberation Serif',serif;letter-spacing:1.38px;">层。</div>
<div class="a" style="left:8.5px;top:263.3px;width:4.4px;height:4.4px;border-radius:50%;background:#777"></div>
<div class="t sl" style="left:32px;top:255.5px;height:20px;line-height:20px;font-size:15.3px;color:#6a6a6a;font-family:'Liberation Serif',serif;width:607px;text-align:justify;text-align-last:justify;">位于地表的一层地壳，在冷却凝结过程中，不断地受到地球内部剧烈运动的冲击和挤</div>
<div class="t sl" style="left:32px;top:275.5px;height:20px;line-height:20px;font-size:15.3px;color:#6a6a6a;font-family:'Liberation Serif',serif;width:607px;text-align:justify;text-align-last:justify;">压，因而变得褶皱不平，有时还会被挤破，形成地震与火山爆发，喷出岩浆与热气。</div>
<div class="t sl" style="left:32px;top:295.5px;height:20px;line-height:20px;font-size:15.3px;color:#6a6a6a;font-family:'Liberation Serif',serif;width:607px;text-align:justify;text-align-last:justify;">开始，这种情况发生频繁，后来渐渐变少，慢慢稳定下来。这种轻重物质分化，产生</div>
<div class="t sl" style="left:32px;top:315.5px;height:20px;line-height:20px;font-size:15.3px;color:#6a6a6a;font-family:'Liberation Serif',serif;letter-spacing:1.38px;">大动荡、大改组的过程，大概是在<span class=dg>45</span>亿年前完成了。</div>
<div class="a" style="left:8.5px;top:346.3px;width:4.4px;height:4.4px;border-radius:50%;background:#777"></div>
<div class="t sl" style="left:32px;top:338.5px;height:20px;line-height:20px;font-size:15.3px;color:#6a6a6a;font-family:'Liberation Serif',serif;width:607px;text-align:justify;text-align-last:justify;">地壳经过冷却定形之后，地球就像个久放而风干了的苹果，表面皱纹密布，凹凸不平。</div>
<div class="t sl" style="left:32px;top:358.5px;height:20px;line-height:20px;font-size:15.3px;color:#6a6a6a;font-family:'Liberation Serif',serif;letter-spacing:1.38px;">高山、平原、河床、海盆，各种地形一应俱全了。</div>
<div class="a" style="left:8.5px;top:389.1px;width:4.4px;height:4.4px;border-radius:50%;background:#777"></div>
<div class="t sl" style="left:32px;top:381.3px;height:20px;line-height:20px;font-size:15.3px;color:#6a6a6a;font-family:'Liberation Serif',serif;width:607px;text-align:justify;text-align-last:justify;">在很长的一个时期内，天空中水气与大气共存于一体；浓云密布，天昏地暗，随着地</div>
<div class="t sl" style="left:32px;top:401.1px;height:20px;line-height:20px;font-size:15.3px;color:#6a6a6a;font-family:'Liberation Serif',serif;width:607px;text-align:justify;text-align-last:justify;">壳逐渐冷却，大气的温度也慢慢地降低，水气以尘埃与火山灰为凝结核，变成水滴，</div>
<div class="t sl" style="left:32px;top:421.0px;height:20px;line-height:20px;font-size:15.3px;color:#6a6a6a;font-family:'Liberation Serif',serif;width:607px;text-align:justify;text-align-last:justify;">越积越多。由于冷却不均，空气对流剧烈，形成雷电狂风，暴雨浊流，雨越下越大，</div>
<div class="t sl" style="left:32px;top:440.9px;height:20px;line-height:20px;font-size:15.3px;color:#6a6a6a;font-family:'Liberation Serif',serif;width:607px;text-align:justify;text-align-last:justify;">一直下了很久很久。滔滔的洪水，通过千川万壑，汇集成巨大的水体，这就是原始的</div>
<div class="t sl" style="left:32px;top:460.7px;height:20px;line-height:20px;font-size:15.3px;color:#6a6a6a;font-family:'Liberation Serif',serif;letter-spacing:1.38px;">海洋。</div>
</div>
<div class="a" style="left:23px;top:500px;width:657px;height:491px;transform-origin:0 0;transform:scale(0.2100);overflow:hidden">
<div class="t" style="left:214px;top:34px;font-size:40px;color:#222;font-weight:bold;font-family:'Liberation Serif',serif">海和洋的区分</div>
<div class="a" style="left:14px;top:106px;width:5px;height:5px;border-radius:50%;background:#777"></div>
<div class="t" style="left:38px;top:98px;height:19px;line-height:19px;font-size:15.5px;color:#7a7a7a;font-family:'Liberation Serif',serif;width:600px;text-align:justify;text-align-last:justify;">定显心大较连洋较陆透稳盐较显透较边面稳面变流洋连积上独地影较流靠边低陆部强。</div>
<div class="t" style="left:38px;top:117px;height:19px;line-height:19px;font-size:15.5px;color:#7a7a7a;font-family:'Liberation Serif',serif;width:600px;text-align:justify;text-align-last:justify;">域球部温温陆近独分季流低统明部稳系地响积潮显低度洋温低影小中连浅浅水统连部。</div>
<div class="t" style="left:38px;top:136px;height:19px;line-height:19px;font-size:15.5px;color:#7a7a7a;font-family:'Liberation Serif',serif;width:600px;text-align:justify;text-align-last:justify;">面是有靠分中上上洋汐透响季定球立海续洋明球度部有陆面上系的强部洋洋深变流明。</div>
<div class="t" style="left:38px;top:155px;height:19px;line-height:19px;font-size:15.5px;color:#7a7a7a;font-family:'Liberation Serif',serif;width:600px;text-align:justify;text-align-last:justify;">洋季影近定独近陆变独透系洋分的是洋部阔汐度和和响水是阔是大大深独的水强深的。</div>
<div class="t" style="left:38px;top:174px;height:19px;line-height:19px;font-size:15.5px;color:#7a7a7a;font-family:'Liberation Serif',serif;">大陆独洋洋地度心立季度影定潮深近域洋潮汐度陆大的。</div>
<div class="a" style="left:14px;top:223px;width:5px;height:5px;border-radius:50%;background:#777"></div>
<div class="t" style="left:38px;top:215px;height:19px;line-height:19px;font-size:15.5px;color:#7a7a7a;font-family:'Liberation Serif',serif;width:600px;text-align:justify;text-align-last:justify;">系温度地影度中球化盐的低深响系的统心分有变影度统分有分度部球部面度海浅节近。</div>
<div class="t" style="left:38px;top:234px;height:19px;line-height:19px;font-size:15.5px;color:#7a7a7a;font-family:'Liberation Serif',serif;width:600px;text-align:justify;text-align-last:justify;">明度球深变小显系稳连小中受上球节度近低广洋浅中大季独定是化明部广的系心大显。</div>
<div class="t" style="left:38px;top:253px;height:19px;line-height:19px;font-size:15.5px;color:#7a7a7a;font-family:'Liberation Serif',serif;width:600px;text-align:justify;text-align-last:justify;">浅阔和度度中明中大定响心海水低缘广影受影化变靠广较潮海阔心上中广连浅球水节。</div>
<div class="t" style="left:38px;top:272px;height:19px;line-height:19px;font-size:15.5px;color:#7a7a7a;font-family:'Liberation Serif',serif;width:600px;text-align:justify;text-align-last:justify;">季水的积的续统流流独强陆盐汐靠中心明海洋的度水上大深显洋上近广大温的分分深。</div>
<div class="t" style="left:38px;top:291px;height:19px;line-height:19px;font-size:15.5px;color:#7a7a7a;font-family:'Liberation Serif',serif;width:600px;text-align:justify;text-align-last:justify;">是受温明影续靠度靠心地潮大明陆中度中化洋洋的度明洋海较分定流上化水度域洋水。</div>
<div class="t" style="left:38px;top:310px;height:19px;line-height:19px;font-size:15.5px;color:#7a7a7a;font-family:'Liberation Serif',serif;width:600px;text-align:justify;text-align-last:justify;">地系中地的浅小独水球度节化定洋透域透阔透潮度深续定深受深边大大边统明分的洋。</div>
<div class="t" style="left:38px;top:329px;height:19px;line-height:19px;font-size:15.5px;color:#7a7a7a;font-family:'Liberation Serif',serif;width:600px;text-align:justify;text-align-last:justify;">季定部积分度变浅面缘面积域温浅变陆深部影度分节的稳明有部影温立是影浅洋度水。</div>
<div class="t" style="left:38px;top:348px;height:19px;line-height:19px;font-size:15.5px;color:#7a7a7a;font-family:'Liberation Serif',serif;width:600px;text-align:justify;text-align-last:justify;">度强定潮浅分分浅和度明地浅续缘上度稳定连温大定盐陆部深球大大上的深靠水的中。</div>
<div class="t" style="left:38px;top:367px;height:19px;line-height:19px;font-size:15.5px;color:#7a7a7a;font-family:'Liberation Serif',serif;width:600px;text-align:justify;text-align-last:justify;">水陆有球和地系海地汐汐近洋水续和水边心显的中响续近的陆化大域化大大地有陆洋。</div>
<div class="t" style="left:38px;top:386px;height:19px;line-height:19px;font-size:15.5px;color:#7a7a7a;font-family:'Liberation Serif',serif;width:600px;text-align:justify;text-align-last:justify;">系度明化的温节和阔有度深面水大深中洋明分汐分明独深深浅立水连洋深透显低边和。</div>
<div class="t" style="left:38px;top:405px;height:19px;line-height:19px;font-size:15.5px;color:#7a7a7a;font-family:'Liberation Serif',serif;width:600px;text-align:justify;text-align-last:justify;">域影影流广部上浅季影受节和汐缘地显连和温的面影域的度的深盐度分边心分边盐显。</div>
<div class="t" style="left:38px;top:424px;height:19px;line-height:19px;font-size:15.5px;color:#7a7a7a;font-family:'Liberation Serif',serif;width:600px;text-align:justify;text-align-last:justify;">化大度水度大大有地陆部流的透立温化独浅地盐海洋稳水水化深度盐化温球季陆的度。</div>
<div class="t" style="left:38px;top:443px;height:19px;line-height:19px;font-size:15.5px;color:#7a7a7a;font-family:'Liberation Serif',serif;">小面部度水广地强稳季续温明是系潮汐统部的球的系和。</div>
</div>
<svg class="ic" style="left:79px;top:626px" width="14" height="14"><path d="M7 0V14M0 7H14" stroke="#5a6070" stroke-width="1.5"/></svg>


<!-- ===== SLIDE ===== -->
<div class="a" style="left:242px;top:117px;width:657px;height:491px;background:linear-gradient(#fdfefe 0%,#eef6f7 50%,#e2f0f1 100%);box-shadow:0 1px 4px 1px rgba(0,0,0,.13)">
<div class="t" style="left:228px;top:39px;font-size:40px;color:#111;font-weight:normal;font-family:'Liberation Serif',serif">海洋的形成</div>
<div class="a" style="left:8.5px;top:101.9px;width:4.4px;height:4.4px;border-radius:50%;background:#111"></div>
<div class="t sl" style="left:32px;top:94.1px;height:20px;line-height:20px;font-size:15.3px;color:#3a3a3a;font-family:'Liberation Serif',serif;width:607px;text-align:justify;text-align-last:justify;">现在的研究证明，大约在<span class=dg>50</span>亿年前，从太阳星云中分离出一些大大小小的星云团块。</div>
<div class="t sl" style="left:32px;top:114.0px;height:20px;line-height:20px;font-size:15.3px;color:#3a3a3a;font-family:'Liberation Serif',serif;width:607px;text-align:justify;text-align-last:justify;">它们一边绕太阳旋转，一边自转。在运动过程中，互相碰撞，有些团块彼此结合，由</div>
<div class="t sl" style="left:32px;top:133.9px;height:20px;line-height:20px;font-size:15.3px;color:#3a3a3a;font-family:'Liberation Serif',serif;width:607px;text-align:justify;text-align-last:justify;">小变大，逐渐成为原始的地球。星云团块碰撞过程中，在引力作用下急剧收缩，加之</div>
<div class="t sl" style="left:32px;top:153.8px;height:20px;line-height:20px;font-size:15.3px;color:#3a3a3a;font-family:'Liberation Serif',serif;width:607px;text-align:justify;text-align-last:justify;">内部放射性元素蜕变，使原始地球不断受到加热增温；当内部温度达到足够高时，地</div>
<div class="t sl" style="left:32px;top:173.7px;height:20px;line-height:20px;font-size:15.3px;color:#3a3a3a;font-family:'Liberation Serif',serif;width:607px;text-align:justify;text-align-last:justify;">内的物质包括铁、镍等开始熔解。在重力作用下，重的下沉并趋向地心集中，形成地</div>
<div class="t sl" style="left:32px;top:193.6px;height:20px;line-height:20px;font-size:15.3px;color:#3a3a3a;font-family:'Liberation Serif',serif;width:607px;text-align:justify;text-align-last:justify;">核；轻者上浮，形成地壳和地幔。在高温下，内部的水分汽化与气体一起冲出来，飞</div>
<div class="t sl" style="left:32px;top:213.5px;height:20px;line-height:20px;font-size:15.3px;color:#3a3a3a;font-family:'Liberation Serif',serif;width:607px;text-align:justify;text-align-last:justify;">升入空中。但是由于地心的引力，它们不会跑掉，只在地球周围，成为气水合一的圈</div>
<div class="t sl" style="left:32px;top:233.4px;height:20px;line-height:20px;font-size:15.3px;color:#3a3a3a;font-family:'Liberation Serif',serif;letter-spacing:1.38px;">层。</div>
<div class="a" style="left:8.5px;top:263.3px;width:4.4px;height:4.4px;border-radius:50%;background:#111"></div>
<div class="t sl" style="left:32px;top:255.5px;height:20px;line-height:20px;font-size:15.3px;color:#3a3a3a;font-family:'Liberation Serif',serif;width:607px;text-align:justify;text-align-last:justify;">位于地表的一层地壳，在冷却凝结过程中，不断地受到地球内部剧烈运动的冲击和挤</div>
<div class="t sl" style="left:32px;top:275.5px;height:20px;line-height:20px;font-size:15.3px;color:#3a3a3a;font-family:'Liberation Serif',serif;width:607px;text-align:justify;text-align-last:justify;">压，因而变得褶皱不平，有时还会被挤破，形成地震与火山爆发，喷出岩浆与热气。</div>
<div class="t sl" style="left:32px;top:295.5px;height:20px;line-height:20px;font-size:15.3px;color:#3a3a3a;font-family:'Liberation Serif',serif;width:607px;text-align:justify;text-align-last:justify;">开始，这种情况发生频繁，后来渐渐变少，慢慢稳定下来。这种轻重物质分化，产生</div>
<div class="t sl" style="left:32px;top:315.5px;height:20px;line-height:20px;font-size:15.3px;color:#3a3a3a;font-family:'Liberation Serif',serif;letter-spacing:1.38px;">大动荡、大改组的过程，大概是在<span class=dg>45</span>亿年前完成了。</div>
<div class="a" style="left:8.5px;top:346.3px;width:4.4px;height:4.4px;border-radius:50%;background:#111"></div>
<div class="t sl" style="left:32px;top:338.5px;height:20px;line-height:20px;font-size:15.3px;color:#3a3a3a;font-family:'Liberation Serif',serif;width:607px;text-align:justify;text-align-last:justify;">地壳经过冷却定形之后，地球就像个久放而风干了的苹果，表面皱纹密布，凹凸不平。</div>
<div class="t sl" style="left:32px;top:358.5px;height:20px;line-height:20px;font-size:15.3px;color:#3a3a3a;font-family:'Liberation Serif',serif;letter-spacing:1.38px;">高山、平原、河床、海盆，各种地形一应俱全了。</div>
<div class="a" style="left:8.5px;top:389.1px;width:4.4px;height:4.4px;border-radius:50%;background:#111"></div>
<div class="t sl" style="left:32px;top:381.3px;height:20px;line-height:20px;font-size:15.3px;color:#3a3a3a;font-family:'Liberation Serif',serif;width:607px;text-align:justify;text-align-last:justify;">在很长的一个时期内，天空中水气与大气共存于一体；浓云密布，天昏地暗，随着地</div>
<div class="t sl" style="left:32px;top:401.1px;height:20px;line-height:20px;font-size:15.3px;color:#3a3a3a;font-family:'Liberation Serif',serif;width:607px;text-align:justify;text-align-last:justify;">壳逐渐冷却，大气的温度也慢慢地降低，水气以尘埃与火山灰为凝结核，变成水滴，</div>
<div class="t sl" style="left:32px;top:421.0px;height:20px;line-height:20px;font-size:15.3px;color:#3a3a3a;font-family:'Liberation Serif',serif;width:607px;text-align:justify;text-align-last:justify;">越积越多。由于冷却不均，空气对流剧烈，形成雷电狂风，暴雨浊流，雨越下越大，</div>
<div class="t sl" style="left:32px;top:440.9px;height:20px;line-height:20px;font-size:15.3px;color:#3a3a3a;font-family:'Liberation Serif',serif;width:607px;text-align:justify;text-align-last:justify;">一直下了很久很久。滔滔的洪水，通过千川万壑，汇集成巨大的水体，这就是原始的</div>
<div class="t sl" style="left:32px;top:460.7px;height:20px;line-height:20px;font-size:15.3px;color:#3a3a3a;font-family:'Liberation Serif',serif;letter-spacing:1.38px;">海洋。</div>
</div>

<!-- ===== SCROLL + RIGHT PANEL ===== -->
<div class="a" style="left:1003px;top:103px;width:12px;height:544px;background:#e9ebef"></div>
<svg class="ic" style="left:1005px;top:110px" width="8" height="5"><path d="M1 4L4 1L7 4Z" fill="#7d8aa6"/></svg>
<div class="a" style="left:1004px;top:346px;width:10px;height:300px;border-radius:5px;background:#d5d8de"></div>
<div class="a" style="left:1015px;top:103px;width:216px;height:544px;background:#f4f5f7"></div>
<div class="t" style="left:1021px;top:110px;color:#444">对象属性<span class="dd">▼</span></div>
<svg class="ic" style="left:1194px;top:108px" width="14" height="14"><path d="M4 1H10L9 6L12 9H2L5 6Z M7 9V13" fill="none" stroke="#555" stroke-width="1.1"/></svg>
<svg class="ic" style="left:1215px;top:110px" width="10" height="10"><path d="M1 1L9 9M9 1L1 9" stroke="#555" stroke-width="1.2"/></svg>
<svg class="ic" style="left:1028px;top:128px" width="19" height="18"><path d="M1 10L7.5 3.5L14 9L8 16Z" fill="none" stroke="#444" stroke-width="1.1"/><path d="M4.5 6.5Q8 0 12 4" fill="none" stroke="#444" stroke-width="1.1"/><rect x="15" y="6" width="2" height="11" rx="1" fill="#7aa2ea"/></svg>
<div class="t" style="left:1027px;top:152px;color:#e8643a">填充</div>
<div class="a" style="left:1023px;top:168px;width:201px;height:1px;background:#e3e5e8"></div>
<div class="a" style="left:1023px;top:167px;width:27px;height:2px;background:#e8643a"></div>
<svg class="ic" style="left:1024px;top:188px" width="6" height="6"><path d="M0 6H6V0Z" fill="#e8643a"/></svg>
<div class="t" style="left:1032px;top:187px;color:#e8643a">填充</div>
<div class="a" style="left:1127px;top:183px;width:91px;height:20px;border:1px solid #e0e2e6;background:#fff;border-radius:2px"></div>
<div class="a" style="left:1129px;top:185px;width:77px;height:16px;background:linear-gradient(#f6fbfb,#dcefef)"></div>
<div class="t" style="left:1208px;top:190px;font-size:6px;color:#666">▼</div>
<div class="a" style="left:1032px;top:213.3px;width:11px;height:11px;border-radius:50%;border:1px solid #b8bcc4;background:#fff"></div>
<div class="t" style="left:1046px;top:213.3px;color:#444">纯色填充(<u>S</u>)</div>
<div class="a" style="left:1032px;top:232.4px;width:11px;height:11px;border-radius:50%;border:1px solid #b8bcc4;background:#fff"></div>
<div class="a" style="left:1035px;top:235.4px;width:5px;height:5px;border-radius:50%;background:#222"></div>
<div class="t" style="left:1046px;top:232.4px;color:#444">渐变填充(<u>G</u>)</div>
<div class="a" style="left:1032px;top:252.0px;width:11px;height:11px;border-radius:50%;border:1px solid #b8bcc4;background:#fff"></div>
<div class="t" style="left:1046px;top:252.0px;color:#444">图片或纹理填充(<u>P</u>)</div>
<div class="a" style="left:1032px;top:271.1px;width:11px;height:11px;border-radius:50%;border:1px solid #b8bcc4;background:#fff"></div>
<div class="t" style="left:1046px;top:271.1px;color:#444">图案填充(<u>A</u>)</div>

<div class="a" style="left:1032px;top:290px;width:11px;height:11px;border:1px solid #b8bcc4;background:#fff;border-radius:1px"></div>
<div class="t" style="left:1046px;top:290.5px;color:#444">隐藏背景图形(<u>H</u>)</div>
<div class="t" style="left:1031px;top:329px;color:#444">渐变样式(R)</div>
<div class="a" style="left:1138px;top:325px;width:18px;height:17px;border:1px solid #c9cdd3;background:#e4e6ea"><div style="margin:2px;width:12px;height:11px;background:linear-gradient(135deg,#f0f0f0,#9a9a9a)"></div></div>
<div class="a" style="left:1160px;top:325px;width:17px;height:17px;border:1px solid #e0e2e6;background:#fff"><div style="margin:2px;width:11px;height:11px;background:radial-gradient(#eee,#999)"></div></div>
<div class="a" style="left:1181px;top:325px;width:17px;height:17px;border:1px solid #e0e2e6;background:#fff"><div style="margin:2px;width:11px;height:11px;background:radial-gradient(#ccc 20%,#777)"></div></div>
<div class="a" style="left:1202px;top:325px;width:17px;height:17px;border:1px solid #e0e2e6;background:#fff"><div style="margin:2px;width:11px;height:11px;background:linear-gradient(45deg,#eee,#777)"></div></div>
<div class="t" style="left:1031px;top:353.5px;color:#444">角度(E)</div>
<div class="a" style="left:1121px;top:350.5px;width:17px;height:17px;border-radius:50%;border:1px solid #888;background:linear-gradient(#fff,#e8e8e8)"></div>
<div class="a" style="left:1132px;top:358px;width:3px;height:3px;border-radius:50%;border:1px solid #999"></div>
<div class="a" style="left:1144px;top:350.5px;width:75px;height:17px;border:1px solid #e0e2e6;background:#fff;border-radius:2px"></div>
<div class="sep" style="left:1163px;top:351px;height:15px;background:#e6e8eb"></div>
<div class="sep" style="left:1199px;top:351px;height:15px;background:#e6e8eb"></div>
<div class="t" style="left:1151px;top:353.5px;color:#444">−</div>
<div class="t" style="left:1166px;top:353.5px;color:#333">90.0°</div>
<div class="t" style="left:1205px;top:353px;color:#444;font-size:12px">+</div>
<div class="a" style="left:1037px;top:375px;width:127px;height:11px;border:1px solid #d6d9de;background:linear-gradient(90deg,#f8fcfc,#dff0f0)"></div>
<svg class="ic" style="left:1030px;top:378px" width="140" height="16"><g stroke="#9aa0a8"><path d="M7 1L12 5V14H2V5Z" fill="#fff"/><path d="M100.5 7L104.5 10V15H96.5V10Z" fill="#eef6f6"/><path d="M112 7L116 10V15H108V10Z" fill="#eaf4f4"/><path d="M133.5 7L137.5 10V15H129.5V10Z" fill="#e4f1f1"/></g></svg>
<div class="a" style="left:1174px;top:374.5px;width:20px;height:19px;border:1px solid #e0e2e6;background:#fff"></div>
<svg class="ic" style="left:1179px;top:377px" width="11" height="13"><path d="M4 1L7 3V10H1V3Z" fill="#888"/><path d="M8 7V12M5.5 9.5H10.5" stroke="#2aa02a" stroke-width="1.6"/></svg>
<div class="a" style="left:1199px;top:374.5px;width:20px;height:19px;border:1px solid #e0e2e6;background:#fff"></div>
<svg class="ic" style="left:1204px;top:377px" width="11" height="13"><path d="M4 1L7 3V10H1V3Z" fill="#aaa"/><path d="M6 8L10 12M10 8L6 12" stroke="#e03030" stroke-width="1.2"/></svg>
<div class="t" style="left:1038px;top:402.5px;color:#444">色标颜色(C)</div>
<div class="a" style="left:1160px;top:399.5px;width:58px;height:16px;border:1px solid #e0e2e6;background:#fff;border-radius:2px"></div>
<div class="t" style="left:1210px;top:405px;font-size:5px;color:#777">▼</div>
<div class="t" style="left:1038px;top:427px;color:#444">透明度(T)</div>
<div class="t" style="left:1145px;top:421px;color:#444;font-size:10px">0%</div>
<div class="a" style="left:1130px;top:426px;width:14px;height:14px;border-radius:50%;border:1px solid #888;background:#fff"></div>
<div class="a" style="left:1204px;top:426px;width:14px;height:14px;border-radius:50%;border:1px solid #888;background:#fff"></div>

<!-- sidebar -->
<div class="a" style="left:1231px;top:103px;width:36px;height:571px;background:#f4f5f7;border-left:1px solid #e2e4e8"></div>
<div class="a" style="left:1240px;top:112px;width:17px;height:1px;background:#c9ccd2"></div>
<div class="a" style="left:1240px;top:115px;width:17px;height:1px;background:#c9ccd2"></div>
<svg class="ic" style="left:1241px;top:130px" width="15" height="15"><path d="M5 10A8 8 0 0 1 13 2A8 8 0 0 1 5 10Z M5 10L3 8L1 8L4 5L7 5 M5 10L7 12L7 14L10 11L10 8" fill="none" stroke="#555d6c" stroke-width="1.1"/><circle cx="9.5" cy="5.5" r="1.3" fill="none" stroke="#555d6c"/></svg>
<div class="a" style="left:1235px;top:155px;width:27px;height:27px;border-radius:2px;background:#dde0e5"></div>
<svg class="ic" style="left:1241px;top:161px" width="15" height="14"><path d="M4 3H14M1 10H11" stroke="#555d6c" stroke-width="1.1"/><circle cx="3" cy="3" r="2" fill="#dde0e5" stroke="#555d6c" stroke-width="1.1"/><circle cx="12" cy="10" r="2" fill="#dde0e5" stroke="#555d6c" stroke-width="1.1"/></svg>
<svg class="ic" style="left:1241px;top:190px" width="15" height="15"><path d="M7.5 1L9.5 5.5L14 6L10.5 9L11.5 14L7.5 11.5L3.5 14L4.5 9L1 6L5.5 5.5Z" fill="none" stroke="#555d6c" stroke-width="1.1"/></svg>
<svg class="ic" style="left:1241px;top:220px" width="15" height="15"><path d="M3 4V1H14V11H11M1 4H11V14H1Z M4 10L6 8L8 10" fill="none" stroke="#555d6c" stroke-width="1.1"/></svg>
<svg class="ic" style="left:1241px;top:250px" width="15" height="15"><circle cx="7.5" cy="7.5" r="6.5" fill="none" stroke="#555d6c" stroke-width="1.1"/><path d="M5.5 5.5A2 2 0 1 1 7.5 8V9.5" fill="none" stroke="#555d6c" stroke-width="1.1"/><circle cx="7.5" cy="11.3" r=".7" fill="#555d6c"/></svg>
<svg class="ic" style="left:1241px;top:279px" width="15" height="15"><path d="M8 13H1V1H14V7" fill="none" stroke="#555d6c" stroke-width="1.1"/><path d="M3 9L6 6L8 8" fill="none" stroke="#555d6c"/><circle cx="11" cy="11" r="3" fill="none" stroke="#555d6c"/></svg>
<svg class="ic" style="left:1241px;top:309px" width="15" height="15"><circle cx="7.5" cy="7.5" r="6.5" fill="none" stroke="#555d6c" stroke-width="1.1"/><path d="M8.5 3L5 8H10L6.5 12" fill="none" stroke="#555d6c" stroke-width="1.1"/></svg>

<!-- ===== NOTES / STATUS / TASKBAR ===== -->
<div class="a" style="left:178px;top:624px;width:825px;height:23px;background:#e9e9e9"></div>
<svg class="ic" style="left:183px;top:629px" width="14" height="12"><path d="M0 1H13M0 5H13M0 9H8M11 8V12M9 10H13" stroke="#666" stroke-width="1.1"/></svg>
<div class="t" style="left:202px;top:629px;color:#555;font-size:11px">单击此处添加备注</div>
<div class="a" style="left:0;top:647px;width:1267px;height:27px;background:#f9fafb;border-top:1px solid #eaebed"></div>
<div class="t" style="left:4px;top:656px;color:#444">幻灯片 3 / 4</div>
<div class="sep" style="left:66px;top:653px;height:14px;background:#e3e5e8"></div>
<div class="t" style="left:75px;top:656px;color:#444">默认设计模板</div>
<div class="sep" style="left:143px;top:653px;height:14px;background:#e3e5e8"></div>
<div class="a" style="left:0;top:674px;width:1267px;height:40px;background:linear-gradient(90deg,#d3dae6,#d9e0ea 40%,#d6dde8)"></div>
<svg class="ic" style="left:14px;top:685px" width="18" height="18"><defs><radialGradient id="mg" cx="60%" cy="70%"><stop offset="0" stop-color="#ffe85a"/><stop offset="1" stop-color="#f0a800"/></radialGradient><mask id="mm"><rect width="18" height="18" fill="#fff"/><circle cx="5" cy="4.5" r="7.2" fill="#000"/></mask></defs><circle cx="9.5" cy="9" r="7.5" fill="url(#mg)" mask="url(#mm)"/></svg>
<div class="t" style="left:39px;top:682px;color:#333;font-size:10px">25°C</div>
<div class="t" style="left:39px;top:696px;color:#444">晴朗</div>
<svg class="ic" style="left:440px;top:685px" width="19" height="19"><g fill="#1e90e0"><rect x="0" y="0" width="9" height="9" fill="#36a9f0"/><rect x="10" y="0" width="9" height="9" fill="#2a9ae8"/><rect x="0" y="10" width="9" height="9" fill="#1a86d8"/><rect x="10" y="10" width="9" height="9" fill="#1478d0"/></g></svg>
<svg class="ic" style="left:477px;top:685px" width="19" height="19"><circle cx="11" cy="8" r="6.5" fill="none" stroke="#1b1b1b" stroke-width="2"/><path d="M6.5 12.5L1.5 17.5" stroke="#1b1b1b" stroke-width="2.3"/></svg>
<svg class="ic" style="left:513px;top:685px" width="20" height="19"><rect x="6" y="0" width="14" height="12" fill="#f4f4f4" stroke="#e0e0e0"/><rect x="0" y="6" width="14" height="13" fill="#222"/><rect x="6" y="6" width="8" height="6" fill="#999"/></svg>
<svg class="ic" style="left:549px;top:685px" width="20" height="19"><path d="M0 1H7L9 3H20V19H0Z" fill="#f2b90c"/><rect x="0" y="4" width="20" height="15" fill="#ffd24a"/><rect x="5" y="13" width="10" height="4" rx="1" fill="#1a7ad8"/></svg>
<svg class="ic" style="left:584px;top:685px" width="8" height="19"><path d="M1 4L8 1V19H1Z" fill="#2a9ae8"/><path d="M1 4L8 1V6Z" fill="#0e5ea8"/><path d="M2 6L8 4V9Z" fill="#fff" opacity=".9"/></svg>

<!-- ===== QQ WINDOW ===== -->
<div class="a" style="left:591px;top:431px;width:680px;height:290px;background:#323538;box-shadow:0 0 4px 1px rgba(0,0,0,.28)"></div>
<div class="a" style="left:591px;top:431px;width:676px;height:27px;background:#2789dd"></div>
<svg class="ic" style="left:597px;top:435px" width="15" height="17"><defs><radialGradient id="wc" cx="40%" cy="35%"><stop offset="0" stop-color="#fff"/><stop offset=".7" stop-color="#e8e8e8"/><stop offset="1" stop-color="#9aa"/></radialGradient></defs><ellipse cx="7.5" cy="14" rx="5" ry="2.6" fill="#c8965a"/><ellipse cx="7.5" cy="12.8" rx="4.5" ry="1.8" fill="#e8c08a"/><circle cx="7.5" cy="7" r="6.5" fill="url(#wc)"/><circle cx="7.5" cy="6.5" r="3.2" fill="#1e4f8e"/><circle cx="6.5" cy="5.5" r="1" fill="#8ab4e8"/></svg>
<div class="t" style="left:616px;top:439px;color:#fff;font-size:10px">QQ电话&nbsp;&nbsp;-&nbsp;&nbsp;21职业经理专科一班 内部群</div>
<div class="a" style="left:1207px;top:446px;width:8px;height:2px;background:#fff"></div>
<div class="a" style="left:1231px;top:441px;width:9px;height:7px;border:2px solid #fff"></div>
<svg class="ic" style="left:1255px;top:440px" width="9" height="9"><path d="M1 1L8 8M8 1L1 8" stroke="#fff" stroke-width="1.6"/></svg>
<div class="a" style="left:591px;top:458px;width:432px;height:256px;background:#323538"></div>
<div class="a" style="left:1023px;top:458px;width:244px;height:256px;background:#f0f0f0"></div>
<div class="t" style="left:1031px;top:461px;color:#333;font-size:10px">群成员 31/32</div>
<svg class="ic" style="left:1053px;top:486.3px" width="13" height="13"><defs><clipPath id="cp0"><circle cx="6.5" cy="6.5" r="6.5"/></clipPath></defs><g clip-path="url(#cp0)"><rect width="13" height="13" fill="#3a3528"/><ellipse cx="8" cy="5" rx="3.5" ry="4" fill="#c9a07a"/><ellipse cx="5" cy="10" rx="3" ry="3" fill="#5a6a7a"/></g></svg>
<div class="a" style="left:1061px;top:493.6px;width:6px;height:6px;background:#3a90f0;border:1px solid #e8eef6"></div>
<div class="t" style="left:1068px;top:486.8px;color:#1a1a1a;font-size:10px">孟相荣</div>
<svg class="ic" style="left:1233px;top:486.8px" width="12" height="12"><rect x="3.5" y="0.5" width="4.5" height="7" rx="2.2" fill="#8a8a8a"/><path d="M2 5A3.8 3.8 0 0 0 9.5 5M5.8 9V11.5" fill="none" stroke="#8a8a8a"/><path d="M1 1L11 11" stroke="#e83a6a" stroke-width="1.3"/></svg>
<svg class="ic" style="left:1053px;top:509.4px" width="13" height="13"><defs><clipPath id="cp1"><circle cx="6.5" cy="6.5" r="6.5"/></clipPath></defs><g clip-path="url(#cp1)"><rect width="13" height="13" fill="#6aa86a"/><ellipse cx="5" cy="6" rx="3.5" ry="3" fill="#f0f0f0"/><ellipse cx="8" cy="8" rx="2" ry="2" fill="#c8d0e0"/></g></svg>
<div class="a" style="left:1061px;top:516.7px;width:6px;height:6px;background:#3a90f0;border:1px solid #e8eef6"></div>
<div class="t" style="left:1068px;top:509.9px;color:#1a1a1a;font-size:10px">邵瑞雪</div>
<svg class="ic" style="left:1233px;top:509.9px" width="12" height="12"><rect x="3.5" y="0.5" width="4.5" height="7" rx="2.2" fill="#8a8a8a"/><path d="M2 5A3.8 3.8 0 0 0 9.5 5M5.8 9V11.5" fill="none" stroke="#8a8a8a"/><path d="M1 1L11 11" stroke="#e83a6a" stroke-width="1.3"/></svg>
<svg class="ic" style="left:1053px;top:532.6px" width="13" height="13"><defs><clipPath id="cp2"><circle cx="6.5" cy="6.5" r="6.5"/></clipPath></defs><g clip-path="url(#cp2)"><rect width="13" height="13" fill="#8a8a88"/><ellipse cx="6" cy="3" rx="5" ry="2.5" fill="#d8d8d0"/><ellipse cx="5" cy="9" rx="3" ry="3" fill="#3a3a3a"/></g></svg>
<div class="a" style="left:1061px;top:539.9px;width:6px;height:6px;background:#3a90f0;border:1px solid #e8eef6"></div>
<div class="t" style="left:1068px;top:533.1px;color:#1a1a1a;font-size:10px">孙钧政</div>
<svg class="ic" style="left:1233px;top:533.1px" width="12" height="12"><rect x="3.5" y="0.5" width="4.5" height="7" rx="2.2" fill="#8a8a8a"/><path d="M2 5A3.8 3.8 0 0 0 9.5 5M5.8 9V11.5" fill="none" stroke="#8a8a8a"/><path d="M1 1L11 11" stroke="#e83a6a" stroke-width="1.3"/></svg>
<svg class="ic" style="left:1053px;top:555.7px" width="13" height="13"><defs><clipPath id="cp3"><circle cx="6.5" cy="6.5" r="6.5"/></clipPath></defs><g clip-path="url(#cp3)"><rect width="13" height="13" fill="#2a2a48"/><ellipse cx="7" cy="6" rx="2" ry="4" fill="#e8e8f0"/><ellipse cx="5" cy="5" rx="2" ry="2" fill="#9a8ac8"/></g></svg>
<div class="a" style="left:1061px;top:563.0px;width:6px;height:6px;background:#3a90f0;border:1px solid #e8eef6"></div>
<div class="t" style="left:1068px;top:556.2px;color:#1a1a1a;font-size:10px">徐梦婷</div>
<svg class="ic" style="left:1233px;top:556.2px" width="12" height="12"><rect x="3.5" y="0.5" width="4.5" height="7" rx="2.2" fill="#8a8a8a"/><path d="M2 5A3.8 3.8 0 0 0 9.5 5M5.8 9V11.5" fill="none" stroke="#8a8a8a"/><path d="M1 1L11 11" stroke="#e83a6a" stroke-width="1.3"/></svg>
<svg class="ic" style="left:1053px;top:578.8px" width="13" height="13"><defs><clipPath id="cp4"><circle cx="6.5" cy="6.5" r="6.5"/></clipPath></defs><g clip-path="url(#cp4)"><rect width="13" height="13" fill="#c8c4c0"/><ellipse cx="6" cy="5" rx="4" ry="4" fill="#e0dcd8"/><ellipse cx="5" cy="6" rx="1" ry="1.5" fill="#d03030"/></g></svg>
<div class="a" style="left:1061px;top:586.1px;width:6px;height:6px;background:#3a90f0;border:1px solid #e8eef6"></div>
<div class="t" style="left:1068px;top:579.3px;color:#1a1a1a;font-size:10px">杨亚宁</div>
<svg class="ic" style="left:1233px;top:579.3px" width="12" height="12"><rect x="3.5" y="0.5" width="4.5" height="7" rx="2.2" fill="#8a8a8a"/><path d="M2 5A3.8 3.8 0 0 0 9.5 5M5.8 9V11.5" fill="none" stroke="#8a8a8a"/><path d="M1 1L11 11" stroke="#e83a6a" stroke-width="1.3"/></svg>
<svg class="ic" style="left:1053px;top:602.0px" width="13" height="13"><defs><clipPath id="cp5"><circle cx="6.5" cy="6.5" r="6.5"/></clipPath></defs><g clip-path="url(#cp5)"><rect width="13" height="13" fill="#181818"/><ellipse cx="6" cy="8" rx="3.5" ry="3" fill="#e0e0d8"/><ellipse cx="9" cy="5" rx="2" ry="2" fill="#fafafa"/></g></svg>
<div class="a" style="left:1061px;top:609.3px;width:6px;height:6px;background:#3a90f0;border:1px solid #e8eef6"></div>
<div class="t" style="left:1068px;top:602.5px;color:#1a1a1a;font-size:10px">仪欣萍</div>
<svg class="ic" style="left:1233px;top:602.5px" width="12" height="12"><rect x="3.5" y="0.5" width="4.5" height="7" rx="2.2" fill="#8a8a8a"/><path d="M2 5A3.8 3.8 0 0 0 9.5 5M5.8 9V11.5" fill="none" stroke="#8a8a8a"/><path d="M1 1L11 11" stroke="#e83a6a" stroke-width="1.3"/></svg>
<svg class="ic" style="left:1053px;top:625.1px" width="13" height="13"><defs><clipPath id="cp6"><circle cx="6.5" cy="6.5" r="6.5"/></clipPath></defs><g clip-path="url(#cp6)"><rect width="13" height="13" fill="#c8b040"/><ellipse cx="7" cy="6" rx="3.5" ry="5" fill="#2a2a2a"/><ellipse cx="5" cy="8" rx="2" ry="2" fill="#f0e8d0"/></g></svg>
<div class="a" style="left:1061px;top:632.4px;width:6px;height:6px;background:#3a90f0;border:1px solid #e8eef6"></div>
<div class="t" style="left:1068px;top:625.6px;color:#1a1a1a;font-size:10px">张德洋</div>
<svg class="ic" style="left:1233px;top:625.6px" width="12" height="12"><rect x="3.5" y="0.5" width="4.5" height="7" rx="2.2" fill="#8a8a8a"/><path d="M2 5A3.8 3.8 0 0 0 9.5 5M5.8 9V11.5" fill="none" stroke="#8a8a8a"/><path d="M1 1L11 11" stroke="#e83a6a" stroke-width="1.3"/></svg>
<svg class="ic" style="left:1053px;top:648.2px" width="13" height="13"><defs><clipPath id="cp7"><circle cx="6.5" cy="6.5" r="6.5"/></clipPath></defs><g clip-path="url(#cp7)"><rect width="13" height="13" fill="#8a6a4a"/><ellipse cx="8" cy="9" rx="4" ry="3.5" fill="#e8a040"/><ellipse cx="5" cy="5" rx="2.5" ry="2.5" fill="#d8c0a0"/></g></svg>
<div class="t" style="left:1068px;top:648.7px;color:#1a1a1a;font-size:10px">张康宁</div>
<svg class="ic" style="left:1233px;top:648.7px" width="12" height="12"><rect x="3.5" y="0.5" width="4.5" height="7" rx="2.2" fill="#8a8a8a"/><path d="M2 5A3.8 3.8 0 0 0 9.5 5M5.8 9V11.5" fill="none" stroke="#8a8a8a"/><path d="M1 1L11 11" stroke="#e83a6a" stroke-width="1.3"/></svg>
<svg class="ic" style="left:1053px;top:671.3px" width="13" height="13"><defs><clipPath id="cp8"><circle cx="6.5" cy="6.5" r="6.5"/></clipPath></defs><g clip-path="url(#cp8)"><rect width="13" height="13" fill="#e8dcc0"/><ellipse cx="6" cy="7" rx="3" ry="5" fill="#222"/><ellipse cx="9" cy="4" rx="2" ry="2" fill="#f8f0e0"/></g></svg>
<div class="a" style="left:1061px;top:678.6px;width:6px;height:6px;background:#3a90f0;border:1px solid #e8eef6"></div>
<div class="t" style="left:1068px;top:671.8px;color:#1a1a1a;font-size:10px">张丽倩</div>
<svg class="ic" style="left:1233px;top:671.8px" width="12" height="12"><rect x="3.5" y="0.5" width="4.5" height="7" rx="2.2" fill="#8a8a8a"/><path d="M2 5A3.8 3.8 0 0 0 9.5 5M5.8 9V11.5" fill="none" stroke="#8a8a8a"/><path d="M1 1L11 11" stroke="#e83a6a" stroke-width="1.3"/></svg>
<svg class="ic" style="left:1053px;top:694.5px" width="13" height="13"><defs><clipPath id="cp9"><circle cx="6.5" cy="6.5" r="6.5"/></clipPath></defs><g clip-path="url(#cp9)"><rect width="13" height="13" fill="#0a0a10"/><ellipse cx="7" cy="8" rx="3" ry="3.5" fill="#d8d0d8"/><ellipse cx="6" cy="3" rx="4" ry="2" fill="#333"/></g></svg>
<div class="a" style="left:1061px;top:701.8px;width:6px;height:6px;background:#3a90f0;border:1px solid #e8eef6"></div>
<div class="t" style="left:1068px;top:695.0px;color:#1a1a1a;font-size:10px">张正辉</div>
<svg class="ic" style="left:1233px;top:695.0px" width="12" height="12"><rect x="3.5" y="0.5" width="4.5" height="7" rx="2.2" fill="#8a8a8a"/><path d="M2 5A3.8 3.8 0 0 0 9.5 5M5.8 9V11.5" fill="none" stroke="#8a8a8a"/><path d="M1 1L11 11" stroke="#e83a6a" stroke-width="1.3"/></svg>

<div class="a" style="left:1264px;top:651px;width:3px;height:63px;background:#c8c8c8"></div>
<div class="a" style="left:737px;top:547px;width:138px;height:80px;border:2px solid #e6e010;background:#f4f5f7;overflow:hidden">
<div class="a" style="left:0;top:0;width:1267px;height:714px;background:#f4f5f7;transform-origin:0 0;transform:scale(0.10576,0.10644)">
<!-- ===== TITLE BAR ===== -->
<div class="a" style="left:0;top:0;width:1267px;height:23px;background:#dfe1e5"></div>
<div class="a" style="left:0;top:0;width:55px;height:23px;background:#5c8ef5"></div>
<div class="t" style="left:14px;top:6px;color:#fff">首页</div>
<div class="a" style="left:55px;top:0;width:107px;height:23px;background:#d6d8dd"></div>
<svg class="ic" style="left:65px;top:5px" width="13" height="13"><path d="M2 0H13V9A4 4 0 0 1 9 13H0V2A2 2 0 0 1 2 0Z" fill="#ee2a3c"/><path d="M6.5 10.5C4 9 3.5 6 4.5 3.5M6.5 10.5C9 9 10 6.5 9 4M6.5 10.5V5.5" fill="none" stroke="#fff" stroke-width="1.1"/></svg>
<div class="t" style="left:81px;top:6px;color:#444">稻壳</div>
<div class="a" style="left:162px;top:0;width:206px;height:23px;background:#fff"></div>
<svg class="ic" style="left:170px;top:5px" width="13" height="13"><rect width="13" height="13" rx="2" fill="#ec6a3d"/><path d="M4 11V3H8.5A2.3 2.3 0 0 1 8.5 7.5H4" fill="none" stroke="#fff" stroke-width="1.3"/></svg>
<div class="t" style="left:186px;top:6px;color:#333">21专一”</div><div class="t" style="left:229px;top:6px;color:#333">探索...”</div><div class="t" style="left:266px;top:6px;color:#333">主题团日班会</div>
<svg class="ic" style="left:332px;top:6px" width="12" height="12"><rect x="1" y="1" width="10" height="7" fill="none" stroke="#c8ccd2" stroke-width="1.2"/><line x1="6" y1="8" x2="6" y2="11" stroke="#c8ccd2"/></svg>
<svg class="ic" style="left:351px;top:7px" width="10" height="10"><path d="M1 1L9 9M9 1L1 9" stroke="#888" stroke-width="1.1"/></svg>
<svg class="ic" style="left:376px;top:5px" width="13" height="13"><path d="M6.5 1V12M1 6.5H12" stroke="#444" stroke-width="1.6"/></svg>

<!-- title bar right -->
<svg class="ic" style="left:1143px;top:3px" width="19" height="14"><rect x="1" y="1.5" width="12" height="11" fill="none" stroke="#6b7385" stroke-width="1.2"/><path d="M15 3v9M17.5 4.5v7" stroke="#6b7385" stroke-width="1.2"/><text x="4.5" y="10.5" font-size="8" fill="#3d4557" font-family="Liberation Sans">1</text></svg>
<svg class="ic" style="left:1169px;top:2px" width="17" height="17"><defs><clipPath id="avc"><circle cx="8.5" cy="8.5" r="8.5"/></clipPath></defs><g clip-path="url(#avc)"><rect width="17" height="17" fill="#e6e2cc"/><path d="M0 0H9C11 4 12 9 10 17H0Z" fill="#141a26"/><ellipse cx="6" cy="9" rx="4" ry="5" fill="#2a3444"/><path d="M11 12L14 17H9Z" fill="#1a1f2a"/></g></svg>
<div class="sep" style="left:1194px;top:2px;height:17px;background:#c9ccd3"></div>
<div class="a" style="left:1204px;top:10px;width:9px;height:1px;background:#9aa1ad"></div>
<svg class="ic" style="left:1226px;top:5px" width="11" height="11"><rect x="0.5" y="3" width="7" height="7" fill="none" stroke="#9aa1ad"/><path d="M3 3V0.5H10.5V8H8" fill="none" stroke="#9aa1ad"/></svg>
<svg class="ic" style="left:1250px;top:5px" width="11" height="11"><path d="M1 1L10 10M10 1L1 10" stroke="#9aa1ad" stroke-width="1"/></svg>

<!-- ===== MENU ROW ===== -->
<div class="a" style="left:0;top:23px;width:1267px;height:80px;background:#fff"></div>
<div class="a" style="left:0;top:102px;width:1267px;height:1px;background:#e4e6ea"></div>
<svg class="ic" style="left:7px;top:33px" width="12" height="10"><path d="M0 1H12M0 5H12M0 9H12" stroke="#555" stroke-width="1.1"/></svg>
<div class="t" style="left:24px;top:33px;color:#333">文件</div>
<svg class="ic" style="left:50px;top:36px" width="9" height="6"><path d="M0.5 0.5L4.5 4.5L8.5 0.5" fill="none" stroke="#888"/></svg>
<div class="sep" style="left:65px;top:29px;height:19px"></div>
<svg class="ic" style="left:72px;top:31px" width="13" height="14"><path d="M1 1H9L12 4V13H1Z M3.5 13V8H9.5V13" fill="none" stroke="#474d59" stroke-width="1.1"/></svg>
<svg class="ic" style="left:92px;top:31px" width="13" height="14"><path d="M2 1H12V13H2V10M2 4V1" fill="none" stroke="#474d59" stroke-width="1.1"/><path d="M0 6H6M4 4L6 6L4 8" fill="none" stroke="#474d59"/><circle cx="8" cy="9" r="2" fill="none" stroke="#474d59"/></svg>
<svg class="ic" style="left:111px;top:31px" width="14" height="14"><path d="M3 5V1H11V5M1 5H13V11H1Z M3 9H11V13H3Z" fill="none" stroke="#474d59" stroke-width="1.1"/></svg>
<svg class="ic" style="left:131px;top:31px" width="13" height="14"><path d="M1 1H12V13H1Z" fill="none" stroke="#474d59" stroke-width="1.1"/><circle cx="6.5" cy="7" r="3" fill="none" stroke="#474d59" stroke-width="1.1"/><path d="M8.5 9L11 12" stroke="#474d59" stroke-width="1.2"/></svg>
<svg class="ic" style="left:150px;top:32px" width="20" height="12"><path d="M4 1L1 4L4 7M1 4H7A4 4 0 0 1 7 11H3" fill="none" stroke="#aab0ba" stroke-width="1.1"/><path d="M15 5L17 7L19 5Z" fill="#aab0ba"/></svg>
<svg class="ic" style="left:177px;top:32px" width="12" height="12"><path d="M8 1L11 4L8 7M11 4H5A4 4 0 0 0 5 11H9" fill="none" stroke="#aab0ba" stroke-width="1.1"/></svg>
<svg class="ic" style="left:197px;top:34px" width="9" height="9"><path d="M1 1H8M1 4L4.5 7.5L8 4" fill="none" stroke="#666" stroke-width="1.1"/></svg>
<div class="sep" style="left:213px;top:29px;height:19px"></div>
<div class="a" style="left:219px;top:30px;width:35px;height:17px;border-radius:9px;background:#f06c3c"></div>
<div class="t" style="left:225px;top:33px;color:#fff">开始</div>
<div class="t" style="left:267px;top:33px">插入</div>
<div class="t" style="left:307px;top:33px">设计</div>
<div class="t" style="left:347px;top:33px">切换</div>
<div class="t" style="left:388px;top:33px">动画</div>
<div class="t" style="left:428px;top:33px">放映</div>
<div class="t" style="left:469px;top:33px">审阅</div>
<div class="t" style="left:509px;top:33px">视图</div>
<div class="t" style="left:552px;top:33px">开发工具</div>
<div class="t" style="left:615px;top:33px">会员专享</div>
<div class="t" style="left:675px;top:33px">稻壳资源</div>
<svg class="ic" style="left:737px;top:32px" width="13" height="13"><circle cx="5.5" cy="5.5" r="4.5" fill="none" stroke="#6f86c6" stroke-width="1.1"/><path d="M9 9L12.5 12.5" stroke="#6f86c6" stroke-width="1.2"/></svg>
<div class="t" style="left:751px;top:33px;color:#8a90a0">查找命令、搜索模板</div>
<svg class="ic" style="left:1074px;top:32px" width="17" height="14"><path d="M4 12A3.5 3.5 0 0 1 4 5A5 5 0 0 1 13 4.5A3.5 3.5 0 0 1 13 12Z" fill="none" stroke="#555" stroke-width="1.1"/><circle cx="11" cy="10.5" r="3" fill="#fff" stroke="#555"/><path d="M9.5 10.5H12.5" stroke="#555"/></svg>
<div class="t" style="left:1091px;top:33px">未同步</div>
<svg class="ic" style="left:1130px;top:32px" width="13" height="13"><circle cx="5.5" cy="4" r="3" fill="none" stroke="#6a7080" stroke-width="1.1"/><path d="M1 12A4.5 4.5 0 0 1 10 12Z" fill="none" stroke="#6a7080" stroke-width="1.1"/><path d="M9.5 6H13M11.2 4.2V7.8" stroke="#6a7080"/></svg>
<div class="t" style="left:1146px;top:33px">协作</div>
<svg class="ic" style="left:1174px;top:31px" width="14" height="14"><path d="M1 7V13H13V9M4 9A6 6 0 0 1 10 4H12M9.5 1.5L12.5 4L9.5 6.5" fill="none" stroke="#555" stroke-width="1.1"/></svg>
<div class="t" style="left:1191px;top:33px">分享</div>
<div class="sep" style="left:1217px;top:29px;height:19px"></div>
<svg class="ic" style="left:1228px;top:32px" width="3" height="14"><circle cx="1.5" cy="1.5" r="1" fill="#555"/><circle cx="1.5" cy="6.5" r="1" fill="#555"/><circle cx="1.5" cy="11.5" r="1" fill="#555"/></svg>
<svg class="ic" style="left:1243px;top:34px" width="14" height="8"><path d="M1 7L7 1L13 7" fill="none" stroke="#555" stroke-width="1.1"/></svg>

<!-- sharing notice -->
<div class="a" style="left:480px;top:-4px;width:302px;height:30px;background:#fff;border-radius:4px;box-shadow:0 2px 5px rgba(0,0,0,.22)"></div>
<div class="t" style="left:502px;top:8px;color:#222">正在分享屏幕</div>
<div class="t" style="left:575px;top:8px;color:#222;font-size:10px">00:08:04</div>
<div class="sep" style="left:623px;top:5px;height:16px;background:#e8e8e8"></div>
<div class="t" style="left:649px;top:8px;color:#222">李金哲...等30人正在观看</div>

<!-- ===== RIBBON ===== -->
<svg class="ic" style="left:8px;top:56px" width="21" height="21"><path d="M4 3H2V17H7M12 3H14V6" fill="none" stroke="#4a505c" stroke-width="1.1"/><rect x="5" y="1" width="6" height="3" fill="none" stroke="#4a505c"/><rect x="8" y="7" width="11" height="12" fill="#d9dce1" stroke="#4a505c" stroke-width="1.1"/></svg>
<div class="t" style="left:5px;top:81px">粘贴<span class="dd">▼</span></div>
<svg class="ic" style="left:37px;top:57px" width="15" height="14"><circle cx="3" cy="11" r="2.2" fill="none" stroke="#4a505c" stroke-width="1.1"/><circle cx="12" cy="11" r="2.2" fill="none" stroke="#4a505c" stroke-width="1.1"/><path d="M4.5 9.5L13 0.5M10.5 9.5L2 0.5" stroke="#4a505c" stroke-width="1.1"/></svg>
<div class="t" style="left:54px;top:60px">剪切</div>
<svg class="ic" style="left:37px;top:77px" width="14" height="15"><rect x="4" y="1" width="9" height="10" fill="none" stroke="#4a505c" stroke-width="1.1"/><path d="M4 4H1V14H10V11" fill="none" stroke="#4a505c" stroke-width="1.1"/></svg>
<div class="t" style="left:54px;top:80px">复制</div>
<svg class="ic" style="left:86px;top:56px" width="17" height="21"><path d="M6 1H11V7H15V19H2V7H6Z" fill="none" stroke="#4a505c" stroke-width="1.1"/><rect x="2.5" y="13" width="12" height="5.5" fill="#d9dce1"/><path d="M2 12H15" stroke="#4a505c"/></svg>
<div class="t" style="left:79px;top:81px">格式刷</div>
<div class="t" style="left:111px;top:93px;font-size:6px;color:#999">◢</div>
<div class="sep" style="left:118px;top:52px;height:48px;background:#eceef1"></div>
<svg class="ic" style="left:139px;top:57px" width="19" height="19"><circle cx="9.5" cy="9.5" r="8.5" fill="none" stroke="#4a505c" stroke-width="1.1"/><path d="M7.5 5.5L13 9.5L7.5 13.5Z" fill="none" stroke="#4a505c" stroke-width="1.1"/></svg>
<div class="t" style="left:126px;top:81px">当页开始<span class="dd">▼</span></div>
<div class="sep" style="left:178px;top:52px;height:48px;background:#eceef1"></div>
<svg class="ic" style="left:204px;top:56px" width="21" height="20"><path d="M16 4V18H2V4H13" fill="none" stroke="#4a505c" stroke-width="1.1"/><path d="M17 0V6M14 3H20" stroke="#4a505c" stroke-width="1.1"/><path d="M5 9H13M5 12H7M9 12H13M5 15H7M9 15H13" stroke="#4a505c" stroke-width="1.1"/></svg>
<div class="t" style="left:186px;top:81px">新建幻灯片<span class="dd">▼</span></div>
<svg class="ic" style="left:254px;top:57px" width="20" height="18"><rect x="1" y="1" width="18" height="16" fill="none" stroke="#4a505c" stroke-width="1.1"/><path d="M4 6H16M4 9.5H9M11 9.5H16M4 13H9M11 13H16" stroke="#4a505c" stroke-width="1.1"/></svg>
<div class="t" style="left:251px;top:81px">版式<span class="dd">▼</span></div>
<svg class="ic" style="left:283px;top:59px" width="15" height="13"><path d="M9 11H1V1H13V6" fill="none" stroke="#4a505c" stroke-width="1.1"/><path d="M3 4H10M3 7H6" stroke="#4a505c"/><path d="M7.5 10A3 3 0 1 0 10.5 7M9 5.5L10.5 7L8.5 8" fill="none" stroke="#4a505c"/></svg>
<div class="t" style="left:300px;top:60px;font-weight:bold;color:#3a3f4a">重置</div>
<svg class="ic" style="left:283px;top:78px" width="15" height="14"><path d="M3 1H13M1 4V13H13V4H4" fill="none" stroke="#c0c4cb" stroke-width="1.1"/></svg>
<div class="t gr" style="left:300px;top:80px">节<span class="dd" style="color:#bbb">▼</span></div>
<div class="sep" style="left:326px;top:52px;height:48px;background:#eceef1"></div>
<div class="a" style="left:330px;top:55px;width:146px;height:19px;border:1px solid #e6e8eb;background:#fff"></div>
<div class="sep" style="left:425px;top:56px;height:17px;background:#e6e8eb"></div>
<div class="t" style="left:418px;top:61px;font-size:7px;color:#6a7390">▼</div>
<div class="t" style="left:468px;top:61px;font-size:7px;color:#6a7390">▼</div>
<div class="t" style="left:481px;top:57px;font-size:15px;color:#8a909c;font-weight:normal">A<span style="font-size:8px;vertical-align:6px">+</span></div>
<div class="t" style="left:500px;top:57px;font-size:15px;color:#8a909c">A<span style="font-size:8px;vertical-align:6px">−</span></div>
<svg class="ic" style="left:520px;top:56px" width="15" height="15"><path d="M8 1L14 7L8 13H4L1 10L8 3Z M4.5 6.5L10 12" fill="none" stroke="#8a909c" stroke-width="1.1"/></svg>
<div class="t" style="left:334px;top:78px;font-size:14px;font-weight:bold;color:#a8adb6">B</div>
<div class="t" style="left:356px;top:78px;font-size:14px;font-style:italic;color:#a8adb6;font-family:'Liberation Serif',serif">I</div>
<svg class="ic" style="left:370px;top:78px" width="13" height="14"><path d="M2 1V7A4.5 4.5 0 0 0 11 7V1M1 13H12" fill="none" stroke="#a8adb6" stroke-width="1.1"/></svg>
<svg class="ic" style="left:390px;top:78px" width="13" height="14"><path d="M11 3A4.5 2.5 0 1 0 6.5 6.5A4.5 2.5 0 1 1 2 10M0 7H13" fill="none" stroke="#a8adb6" stroke-width="1.1"/></svg>
<svg class="ic" style="left:409px;top:78px" width="13" height="14"><path d="M2 10L6.5 1L11 10M3.5 7H9.5M0 13H13" fill="none" stroke="#a8adb6" stroke-width="1.1"/></svg>
<div class="t" style="left:422px;top:83px;font-size:7px;color:#a8adb6">▼</div>
<div class="t" style="left:433px;top:79px;font-size:14px;color:#a8adb6">X<span style="font-size:7px;vertical-align:6px">2</span></div>
<div class="t" style="left:453px;top:79px;font-size:14px;color:#a8adb6">X<span style="font-size:7px;vertical-align:-2px">2</span></div>
<div class="t" style="left:477px;top:77px;font-size:8px;color:#3a3f4a;font-weight:bold">wén</div>
<div class="t" style="left:480px;top:84px;font-size:10px;color:#3a3f4a">文</div>
<div class="t" style="left:493px;top:83px;font-size:7px;color:#555">▼</div>
<svg class="ic" style="left:504px;top:78px" width="16" height="14"><path d="M3 9L10 2L13 5L6 12H3Z" fill="none" stroke="#a8adb6" stroke-width="1.1"/><path d="M0 13H16" stroke="#a8adb6" stroke-width="1.5"/></svg>
<div class="t" style="left:520px;top:83px;font-size:7px;color:#a8adb6">▼</div>
<div class="t" style="left:533px;top:93px;font-size:6px;color:#999">◢</div>
<div class="sep" style="left:541px;top:52px;height:48px;background:#eceef1"></div>
<svg class="ic" style="left:547px;top:57px" width="24" height="14"><g fill="#8a909c"><circle cx="2" cy="2" r="1.2"/><circle cx="2" cy="7" r="1.2"/><circle cx="2" cy="12" r="1.2"/></g><path d="M6 2H15M6 7H15M6 12H15" stroke="#8a909c" stroke-width="1.1"/><path d="M18 5L20.5 8L23 5Z" fill="#6a7390"/></svg>
<svg class="ic" style="left:572px;top:56px" width="24" height="15"><text x="0" y="5" font-size="5" fill="#8a909c">1</text><text x="0" y="10" font-size="5" fill="#8a909c">2</text><text x="0" y="15" font-size="5" fill="#8a909c">3</text><path d="M6 3H15M6 8H15M6 13H15" stroke="#8a909c" stroke-width="1.1"/><path d="M18 6L20.5 9L23 6Z" fill="#6a7390"/></svg>
<div class="sep" style="left:600px;top:56px;height:16px"></div>
<svg class="ic" style="left:606px;top:57px" width="15" height="13"><path d="M1 1H14M7 5H14M7 8H14M1 12H14M5 6.5H1M3 4.5L1 6.5L3 8.5" fill="none" stroke="#8a909c" stroke-width="1"/></svg>
<svg class="ic" style="left:625px;top:57px" width="15" height="13"><path d="M1 1H14M7 5H14M7 8H14M1 12H14M1 6.5H5M3 4.5L5 6.5L3 8.5" fill="none" stroke="#8a909c" stroke-width="1"/></svg>
<div class="sep" style="left:645px;top:56px;height:16px"></div>
<svg class="ic" style="left:651px;top:57px" width="24" height="13"><path d="M0 1H14M0 12H14" stroke="#8a909c"/><text x="1" y="10" font-size="8" fill="#8a909c" font-family="Liberation Sans">AB</text><path d="M17 5L19.5 8L22 5Z" fill="#6a7390"/></svg>
<svg class="ic" style="left:677px;top:56px" width="22" height="15"><path d="M3 1V14M1 11.5L3 14L5 11.5" fill="none" stroke="#3a3f4a" stroke-width="1.2"/><text x="6" y="7" font-size="7" fill="#3a3f4a" font-family="Liberation Sans">A</text><path d="M8 10L10 13L12 10" fill="none" stroke="#3a3f4a"/><path d="M15 5L17.5 8L20 5Z" fill="#555"/></svg>
<svg class="ic" style="left:716px;top:57px" width="14" height="14"><path d="M3 1H1V13H3M11 1H13V13H11M7 2V12M5 4L7 2L9 4M5 10L7 12L9 10" fill="none" stroke="#b9bcc2" stroke-width="1"/></svg>
<div class="t gr" style="left:733px;top:60px">对齐文本<span class="dd" style="color:#bbb">▼</span></div>
<svg class="ic" style="left:548px;top:77px" width="100" height="15"><g stroke="#b0b5bd" stroke-width="1.1"><path d="M1 2H14M3 5H12M1 8H14M3 11H12M1 14H14"/><path d="M24 2H36M24 5H33M24 8H36M24 11H33M24 14H36"/><path d="M42 2H54M44 5H52M42 8H54M44 11H52M42 14H54"/><path d="M60 2H72M63 5H72M60 8H72M63 11H72M60 14H72"/><path d="M78 2H91M78 5H91M78 8H91M78 11H91M78 14H91"/></g></svg>
<svg class="ic" style="left:626px;top:77px" width="15" height="15"><path d="M1 1V14M14 1V14M1 14H14M4 5H11M4 10H11M7.5 1V4M5.5 2.5L7.5 4.5L9.5 2.5" fill="none" stroke="#b0b5bd" stroke-width="1"/></svg>
<div class="sep" style="left:645px;top:77px;height:16px"></div>
<svg class="ic" style="left:652px;top:77px" width="60" height="15"><g stroke="#b0b5bd" stroke-width="1.1" fill="none"><path d="M7 2H14M7 6H14M7 10H14M7 14H14M3 1V6M1 3L3 1L5 3M3 9V14M1 12L3 14L5 12"/><path d="M27 2H34M27 6H34M27 10H34M27 14H34M23 1V6M21 4L23 6L25 4M23 9V14M21 11L23 9L25 11"/><path d="M45 2H52M45 6H52M45 10H52M45 14H52M41 1V14M39 3L41 1L43 3M39 12L41 14L43 12"/></g><path d="M54 7L56.5 10L59 7Z" fill="#b0b5bd"/></svg>
<svg class="ic" style="left:717px;top:77px" width="16" height="15"><path d="M1 1H5V10H1Z" fill="none" stroke="#b0b5bd"/><rect x="6" y="6" width="9" height="8" rx="1" fill="none" stroke="#b0b5bd"/><path d="M8 10H13" stroke="#b0b5bd"/></svg>
<div class="t gr" style="left:734px;top:80px">转智能图形<span class="dd" style="color:#bbb">▼</span></div>
<div class="t" style="left:787px;top:93px;font-size:6px;color:#999">◢</div>
<div class="sep" style="left:796px;top:52px;height:48px;background:#eceef1"></div>
<svg class="ic" style="left:811px;top:57px" width="20" height="19"><rect x="2" y="2" width="16" height="15" fill="none" stroke="#4a505c" stroke-width="1.1"/><g fill="#4a505c"><rect x="0.5" y="0.5" width="3" height="3"/><rect x="16.5" y="0.5" width="3" height="3"/><rect x="0.5" y="15.5" width="3" height="3"/><rect x="16.5" y="15.5" width="3" height="3"/></g><text x="4" y="12" font-size="9" fill="#4a505c" font-family="Liberation Sans">A</text><path d="M11 7H15M11 10H15M5 14H15" stroke="#4a505c"/></svg>
<div class="t" style="left:803px;top:81px">文本框<span class="dd">▼</span></div>
<svg class="ic" style="left:849px;top:57px" width="23" height="20"><path d="M12 7V1H1V13H8" fill="none" stroke="#4a505c" stroke-width="1.1"/><circle cx="15" cy="12" r="7" fill="none" stroke="#4a505c" stroke-width="1.1"/></svg>
<div class="t" style="left:847px;top:81px">形状<span class="dd">▼</span></div>
<svg class="ic" style="left:880px;top:58px" width="14" height="13"><rect x="1" y="1" width="12" height="11" fill="none" stroke="#4a505c" stroke-width="1.1"/><path d="M1 11L5 6L9 10M8 9L10 7L13 10" fill="none" stroke="#4a505c"/><circle cx="9.5" cy="4" r="1.2" fill="none" stroke="#4a505c"/></svg>
<div class="t" style="left:897px;top:60px">图片<span class="dd">▼</span></div>
<svg class="ic" style="left:930px;top:57px" width="14" height="14"><path d="M2 7L7 2L12 7L7 11Z M0 13H14" fill="none" stroke="#b9bcc2" stroke-width="1.1"/></svg>
<div class="t gr" style="left:945px;top:60px">填充<span class="dd" style="color:#bbb">▼</span></div>
<svg class="ic" style="left:880px;top:78px" width="14" height="14"><path d="M7 1L13 4L7 7L1 4Z M1 7L7 10L13 7M1 10L7 13L13 10" fill="none" stroke="#4a505c" stroke-width="1.1"/></svg>
<div class="t" style="left:897px;top:80px">排列<span class="dd">▼</span></div>
<svg class="ic" style="left:930px;top:78px" width="14" height="14"><rect x="1" y="1" width="12" height="12" fill="none" stroke="#b9bcc2" stroke-width="1.1"/><rect x="3.5" y="3.5" width="7" height="7" fill="none" stroke="#d6d8dc"/></svg>
<div class="t gr" style="left:945px;top:80px">轮廓<span class="dd" style="color:#bbb">▼</span></div>
<div class="t" style="left:969px;top:93px;font-size:6px;color:#999">◢</div>
<div class="sep" style="left:978px;top:52px;height:48px;background:#eceef1"></div>
<svg class="ic" style="left:998px;top:57px" width="23" height="20"><path d="M16 1H1V13H14M7 13V18M3 18H11" fill="none" stroke="#4a505c" stroke-width="1.1"/><path d="M18 4A3 3 0 0 0 20 10V19H17V10A3 3 0 0 0 18 4" fill="none" stroke="#4a505c" stroke-width="1.1"/></svg>
<div class="t" style="left:985px;top:81px">演示工具<span class="dd">▼</span></div>
<svg class="ic" style="left:1038px;top:57px" width="14" height="14"><circle cx="6" cy="6" r="5" fill="none" stroke="#4a505c" stroke-width="1.1"/><path d="M9.5 9.5L13 13" stroke="#4a505c" stroke-width="1.3"/></svg>
<div class="t" style="left:1055px;top:60px">查找</div>
<svg class="ic" style="left:1038px;top:77px" width="15" height="15"><path d="M3 2H1V11H7M5 9L7 11L5 13" fill="none" stroke="#4a505c" stroke-width="1.1"/><text x="6" y="7" font-size="7" fill="#4a505c" font-family="Liberation Sans">A</text><text x="8" y="14.5" font-size="7" fill="#4a505c" font-family="Liberation Sans">B</text></svg>
<div class="t" style="left:1055px;top:80px">替换<span class="dd">▼</span></div>
<div class="sep" style="left:1087px;top:52px;height:48px;background:#eceef1"></div>
<svg class="ic" style="left:1098px;top:57px" width="21" height="20"><path d="M1 1H15V8M1 1V15H8" fill="none" stroke="#4a505c" stroke-width="1.1" stroke-dasharray="2 1.5"/><path d="M11 7L19 14L15 14.5L13 19Z" fill="none" stroke="#4a505c" stroke-width="1.1"/></svg>
<div class="t" style="left:1095px;top:81px">选择<span class="dd">▼</span></div>
<div class="sep" style="left:1128px;top:52px;height:48px;background:#eceef1"></div>

<!-- ===== LEFT PANEL ===== -->
<div class="a" style="left:177px;top:103px;width:1px;height:544px;background:#e2e4e8"></div>
<svg class="ic" style="left:1px;top:114px" width="10" height="9"><path d="M4.5 1L1 4.5L4.5 8M8.5 1L5 4.5L8.5 8" fill="none" stroke="#555" stroke-width="1.1"/></svg>
<div class="t" style="left:52px;top:115px;color:#444">大纲</div>
<div class="a" style="left:81px;top:113px;width:47px;height:16px;border-radius:3px;background:#dfe2e7"></div>
<div class="t" style="left:89px;top:115px;color:#444">幻灯片</div>
<div class="a" style="left:167px;top:135px;width:7px;height:484px;border-radius:3px;background:#e2e4e8"></div>

<div class="t" style="left:10px;top:147px;font-size:10px;color:#444">1</div>
<div class="a" style="left:22px;top:140px;width:140px;height:106px;border:1px solid #dcdfe3;background:#fff"></div>
<svg class="ic" style="left:25px;top:142px" width="135" height="102" viewBox="0 0 135 102">
<defs>
<linearGradient id="sky" x1="0" y1="0" x2="0" y2="1"><stop offset="0" stop-color="#2c74c8"/><stop offset=".55" stop-color="#5696da"/><stop offset="1" stop-color="#a8cbec"/></linearGradient>
<linearGradient id="sea" x1="0" y1="0" x2="0" y2="1"><stop offset="0" stop-color="#1a58a8"/><stop offset=".12" stop-color="#2174bc"/><stop offset=".3" stop-color="#2a98c8"/><stop offset=".65" stop-color="#2a9cc0"/><stop offset="1" stop-color="#38bcd2"/></linearGradient>
<filter id="b1" x="-30%" y="-30%" width="160%" height="160%"><feGaussianBlur stdDeviation="1.1"/></filter>
<filter id="b2" x="-30%" y="-30%" width="160%" height="160%"><feGaussianBlur stdDeviation="2.2"/></filter>
</defs>
<rect width="135" height="40" fill="url(#sky)"/>
<g filter="url(#b1)"><ellipse cx="26.8" cy="9.6" rx="6.2" ry="4.5" fill="#ffffff"/><ellipse cx="55.6" cy="8.3" rx="5.9" ry="4.2" fill="#e9eff7"/><ellipse cx="20.5" cy="8.1" rx="5.3" ry="3.8" fill="#ffffff"/><ellipse cx="13.3" cy="16.2" rx="7.0" ry="5.0" fill="#ffffff"/><ellipse cx="63.0" cy="21.1" rx="5.9" ry="4.2" fill="#ffffff"/><ellipse cx="41.5" cy="15.5" rx="7.6" ry="5.4" fill="#ffffff"/><ellipse cx="40.3" cy="9.2" rx="5.3" ry="3.8" fill="#e9eff7"/><ellipse cx="14.8" cy="13.4" rx="6.9" ry="4.9" fill="#ffffff"/><ellipse cx="14.0" cy="19.7" rx="4.3" ry="3.1" fill="#ffffff"/><ellipse cx="39.8" cy="7.5" rx="3.8" ry="2.7" fill="#ffffff"/><ellipse cx="36.8" cy="18.8" rx="6.8" ry="4.8" fill="#f4f7fb"/><ellipse cx="42.0" cy="16.9" rx="4.8" ry="3.4" fill="#ffffff"/><ellipse cx="48.5" cy="11.9" rx="5.9" ry="4.2" fill="#e9eff7"/><ellipse cx="36.7" cy="14.2" rx="5.4" ry="3.8" fill="#e9eff7"/><ellipse cx="64.9" cy="8.8" rx="5.3" ry="3.8" fill="#f4f7fb"/><ellipse cx="16.8" cy="17.7" rx="3.7" ry="2.6" fill="#e9eff7"/><ellipse cx="12.5" cy="19.4" rx="6.8" ry="4.9" fill="#f4f7fb"/><ellipse cx="27.7" cy="14.4" rx="5.6" ry="4.0" fill="#f4f7fb"/><ellipse cx="12.0" cy="8.2" rx="4.6" ry="3.3" fill="#e9eff7"/><ellipse cx="46.5" cy="7.5" rx="6.4" ry="4.6" fill="#e9eff7"/><ellipse cx="41.5" cy="22.3" rx="5.4" ry="3.8" fill="#e9eff7"/><ellipse cx="30.4" cy="22.0" rx="3.6" ry="2.6" fill="#f4f7fb"/><ellipse cx="28.6" cy="20.7" rx="5.6" ry="4.0" fill="#ffffff"/><ellipse cx="52.6" cy="9.1" rx="4.5" ry="3.2" fill="#f4f7fb"/><ellipse cx="61.2" cy="17.9" rx="4.2" ry="3.0" fill="#f4f7fb"/><ellipse cx="39.9" cy="27.2" rx="6.9" ry="5.0" fill="#e9eff7"/><ellipse cx="25.6" cy="20.6" rx="3.8" ry="2.7" fill="#b8c6d8"/><ellipse cx="63.6" cy="16.4" rx="3.3" ry="2.4" fill="#c8d4e2"/><ellipse cx="46.9" cy="14.2" rx="5.1" ry="3.7" fill="#c8d4e2"/><ellipse cx="24.7" cy="14.1" rx="4.0" ry="2.8" fill="#b8c6d8"/><ellipse cx="44.1" cy="19.1" rx="3.2" ry="2.3" fill="#d4dde8"/><ellipse cx="63.2" cy="24.5" rx="4.9" ry="3.5" fill="#b8c6d8"/><ellipse cx="60.4" cy="26.5" rx="5.2" ry="3.7" fill="#d4dde8"/><ellipse cx="32.0" cy="20.4" rx="3.1" ry="2.2" fill="#d4dde8"/><ellipse cx="32.4" cy="17.0" rx="5.6" ry="4.0" fill="#b8c6d8"/><ellipse cx="19.1" cy="19.4" rx="2.9" ry="2.1" fill="#c8d4e2"/><ellipse cx="116.5" cy="11.7" rx="6.8" ry="4.9" fill="#e9eff7"/><ellipse cx="96.0" cy="17.7" rx="5.6" ry="4.0" fill="#ffffff"/><ellipse cx="119.1" cy="19.2" rx="5.6" ry="4.0" fill="#f4f7fb"/><ellipse cx="99.7" cy="17.3" rx="7.0" ry="5.0" fill="#f4f7fb"/><ellipse cx="113.3" cy="7.6" rx="4.0" ry="2.9" fill="#e9eff7"/><ellipse cx="108.0" cy="6.8" rx="6.4" ry="4.6" fill="#ffffff"/><ellipse cx="114.6" cy="5.7" rx="6.8" ry="4.9" fill="#f4f7fb"/><ellipse cx="100.6" cy="11.8" rx="3.6" ry="2.6" fill="#e9eff7"/><ellipse cx="106.3" cy="13.6" rx="3.8" ry="2.7" fill="#f4f7fb"/><ellipse cx="114.7" cy="18.3" rx="4.7" ry="3.4" fill="#ffffff"/><ellipse cx="115.2" cy="16.0" rx="4.7" ry="3.3" fill="#ffffff"/><ellipse cx="118.3" cy="16.2" rx="6.2" ry="4.4" fill="#ffffff"/><ellipse cx="125.6" cy="16.7" rx="6.1" ry="4.3" fill="#ffffff"/><ellipse cx="102.6" cy="10.9" rx="6.1" ry="4.3" fill="#ffffff"/><ellipse cx="125.0" cy="10.5" rx="4.2" ry="3.0" fill="#e9eff7"/><ellipse cx="131.3" cy="10.1" rx="6.8" ry="4.8" fill="#f4f7fb"/><ellipse cx="131.3" cy="13.1" rx="3.3" ry="2.3" fill="#c8d4e2"/><ellipse cx="113.4" cy="12.7" rx="3.8" ry="2.7" fill="#d4dde8"/><ellipse cx="127.1" cy="14.7" rx="4.2" ry="3.0" fill="#d4dde8"/><ellipse cx="99.1" cy="17.2" rx="4.7" ry="3.4" fill="#d4dde8"/><ellipse cx="123.8" cy="14.7" rx="3.2" ry="2.3" fill="#d4dde8"/><ellipse cx="108.3" cy="19.2" rx="4.8" ry="3.5" fill="#b8c6d8"/><ellipse cx="79.4" cy="13.9" rx="3.0" ry="2.1" fill="#ffffff"/><ellipse cx="74.7" cy="9.0" rx="3.1" ry="2.2" fill="#f4f7fb"/><ellipse cx="84.9" cy="9.2" rx="4.5" ry="3.2" fill="#f4f7fb"/><ellipse cx="82.5" cy="10.8" rx="4.0" ry="2.8" fill="#ffffff"/><ellipse cx="72.3" cy="14.4" rx="4.3" ry="3.1" fill="#ffffff"/><ellipse cx="71.1" cy="37.3" rx="4.0" ry="2.9" fill="#dfe9f4"/><ellipse cx="111.5" cy="30.1" rx="3.5" ry="2.5" fill="#cfdff0"/><ellipse cx="67.7" cy="35.6" rx="3.7" ry="2.7" fill="#e8f0f8"/><ellipse cx="56.6" cy="29.3" rx="5.3" ry="3.8" fill="#cfdff0"/><ellipse cx="121.2" cy="34.6" rx="5.1" ry="3.6" fill="#e8f0f8"/><ellipse cx="56.8" cy="37.2" rx="4.2" ry="3.0" fill="#e8f0f8"/><ellipse cx="20.5" cy="33.1" rx="5.2" ry="3.7" fill="#dfe9f4"/><ellipse cx="82.2" cy="35.8" rx="3.2" ry="2.3" fill="#dfe9f4"/><ellipse cx="63.9" cy="35.3" rx="4.4" ry="3.1" fill="#cfdff0"/><ellipse cx="92.1" cy="33.3" rx="4.2" ry="3.0" fill="#dfe9f4"/><ellipse cx="119.2" cy="28.6" rx="3.3" ry="2.4" fill="#dfe9f4"/><ellipse cx="104.3" cy="33.1" rx="4.4" ry="3.1" fill="#dfe9f4"/><ellipse cx="59.8" cy="34.1" rx="4.2" ry="3.0" fill="#e8f0f8"/><ellipse cx="26.9" cy="30.8" rx="4.2" ry="3.0" fill="#cfdff0"/><ellipse cx="68.5" cy="30.5" rx="4.3" ry="3.0" fill="#cfdff0"/><ellipse cx="124.6" cy="36.9" rx="3.4" ry="2.4" fill="#cfdff0"/><ellipse cx="18.5" cy="29.2" rx="4.0" ry="2.9" fill="#dfe9f4"/><ellipse cx="90.6" cy="32.3" rx="3.4" ry="2.4" fill="#cfdff0"/></g>
<rect y="40" width="135" height="62" fill="url(#sea)"/>
<rect y="39.5" width="135" height="1.5" fill="#1a4a92"/>
<g filter="url(#b2)" opacity=".55"><ellipse cx="103.0" cy="77.4" rx="6.7" ry="4.8" fill="#185a88"/><ellipse cx="85.4" cy="64.2" rx="7.4" ry="5.3" fill="#1a5f90"/><ellipse cx="125.9" cy="60.5" rx="12.3" ry="8.8" fill="#1f6a9a"/><ellipse cx="115.6" cy="59.1" rx="10.3" ry="7.3" fill="#1a5f90"/><ellipse cx="25.2" cy="65.8" rx="9.2" ry="6.6" fill="#1f6a9a"/><ellipse cx="57.7" cy="63.9" rx="6.2" ry="4.5" fill="#1f6a9a"/><ellipse cx="7.4" cy="68.9" rx="8.7" ry="6.2" fill="#1a5f90"/><ellipse cx="53.0" cy="67.9" rx="7.7" ry="5.5" fill="#1a5f90"/><ellipse cx="19.1" cy="78.0" rx="7.2" ry="5.1" fill="#1a5f90"/><ellipse cx="15.5" cy="61.8" rx="11.9" ry="8.5" fill="#1a5f90"/><ellipse cx="38.8" cy="58.2" rx="8.6" ry="6.1" fill="#185a88"/><ellipse cx="107.4" cy="61.5" rx="6.6" ry="4.7" fill="#185a88"/><ellipse cx="76.3" cy="72.5" rx="6.2" ry="4.4" fill="#1a5f90"/><ellipse cx="104.9" cy="59.6" rx="11.9" ry="8.5" fill="#1f6a9a"/><ellipse cx="122.3" cy="70.9" rx="11.2" ry="8.0" fill="#1a5f90"/><ellipse cx="81.0" cy="60.6" rx="7.5" ry="5.3" fill="#1a5f90"/><ellipse cx="61.7" cy="63.5" rx="9.5" ry="6.8" fill="#1f6a9a"/><ellipse cx="82.7" cy="56.1" rx="10.6" ry="7.5" fill="#1a5f90"/><ellipse cx="126.2" cy="61.5" rx="6.9" ry="4.9" fill="#1f6a9a"/><ellipse cx="83.6" cy="68.3" rx="7.0" ry="5.0" fill="#1f6a9a"/><ellipse cx="67.5" cy="59.4" rx="8.0" ry="5.7" fill="#1a5f90"/><ellipse cx="129.3" cy="55.9" rx="5.7" ry="4.1" fill="#185a88"/></g>
<g filter="url(#b2)" opacity=".6"><ellipse cx="74.4" cy="85.4" rx="8.3" ry="5.9" fill="#3fbfd2"/><ellipse cx="14.3" cy="96.7" rx="8.0" ry="5.7" fill="#3fbfd2"/><ellipse cx="73.7" cy="98.0" rx="11.0" ry="7.9" fill="#3fbfd2"/><ellipse cx="92.8" cy="99.7" rx="7.5" ry="5.4" fill="#52cedc"/><ellipse cx="98.4" cy="84.5" rx="11.1" ry="8.0" fill="#46c6d8"/><ellipse cx="113.0" cy="82.3" rx="9.1" ry="6.5" fill="#3fbfd2"/><ellipse cx="58.1" cy="83.0" rx="9.3" ry="6.7" fill="#3fbfd2"/><ellipse cx="117.5" cy="94.1" rx="7.2" ry="5.1" fill="#46c6d8"/><ellipse cx="93.5" cy="82.8" rx="6.6" ry="4.7" fill="#3fbfd2"/><ellipse cx="60.2" cy="86.7" rx="11.0" ry="7.8" fill="#52cedc"/><ellipse cx="43.7" cy="82.6" rx="10.5" ry="7.5" fill="#46c6d8"/><ellipse cx="48.1" cy="82.0" rx="7.7" ry="5.5" fill="#3fbfd2"/><ellipse cx="37.7" cy="93.8" rx="7.0" ry="5.0" fill="#46c6d8"/><ellipse cx="12.3" cy="96.7" rx="6.4" ry="4.6" fill="#52cedc"/></g>
<ellipse cx="30" cy="57" rx="28" ry="3" fill="#8a7a90" opacity=".3" filter="url(#b2)"/>
<path d="M60 49.3H120" stroke="#eef8fa" stroke-width=".8" opacity=".75"/>
<text x="2.5" y="46" font-size="8.3" font-weight="bold" fill="#101010" font-family="Liberation Serif,serif" letter-spacing="1.7">探索海洋知识，传播海洋文化</text>
<text x="86" y="61" font-size="5.2" fill="#0e2a30" font-family="Liberation Sans,sans-serif">21职业经理专科一班</text>
</svg>

<div class="t" style="left:10px;top:267px;font-size:10px;color:#444">2</div>
<div class="a" style="left:22px;top:260px;width:140px;height:106px;border:1px solid #dcdfe3;background:linear-gradient(#fcfdfd,#e2f0f1)"></div>
<div class="t" style="left:84px;top:274px;font-size:11px;color:#222">海洋</div>
<div class="a" style="left:32px;top:303.5px;font-size:6px;line-height:7.6px;color:#222;white-space:nowrap;letter-spacing:-.12px">• 海洋的总面积为3.61×10的8次方平方公里，<br>&nbsp;&nbsp;&nbsp;占地表面积的70.8%<br>• 平均深度-3729米，最深处是西太平洋的马<br>&nbsp;&nbsp;&nbsp;里亚纳海沟（-11034米）。</div>

<div class="t" style="left:10px;top:387px;font-size:10px;color:#e8703f">3</div>
<div class="a" style="left:21px;top:378px;width:142px;height:109px;border:2px solid #f07850;background:linear-gradient(#fcfdfd,#e2f0f1)"></div>

<div class="t" style="left:10px;top:507px;font-size:10px;color:#444">4</div>
<div class="a" style="left:22px;top:499px;width:140px;height:107px;border:1px solid #dcdfe3;background:linear-gradient(#fcfdfd,#e2f0f1)"></div>
<div class="a" style="left:23px;top:380px;width:657px;height:491px;transform-origin:0 0;transform:scale(0.2100);overflow:hidden">
<div class="t" style="left:228px;top:39px;font-size:40px;color:#222;font-weight:bold;font-family:'Liberation Serif',serif">海洋的形成</div>
<div class="a" style="left:8.5px;top:101.9px;width:4.4px;height:4.4px;border-radius:50%;background:#777"></div>
<div class="t sl" style="left:32px;top:94.1px;height:20px;line-height:20px;font-size:15.3px;color:#6a6a6a;font-family:'Liberation Serif',serif;width:607px;text-align:justify;text-align-last:justify;">现在的研究证明，大约在<span class=dg>50</span>亿年前，从太阳星云中分离出一些大大小小的星云团块。</div>
<div class="t sl" style="left:32px;top:114.0px;height:20px;line-height:20px;font-size:15.3px;color:#6a6a6a;font-family:'Liberation Serif',serif;width:607px;text-align:justify;text-align-last:justify;">它们一边绕太阳旋转，一边自转。在运动过程中，互相碰撞，有些团块彼此结合，由</div>
<div class="t sl" style="left:32px;top:133.9px;height:20px;line-height:20px;font-size:15.3px;color:#6a6a6a;font-family:'Liberation Serif',serif;width:607px;text-align:justify;text-align-last:justify;">小变大，逐渐成为原始的地球。星云团块碰撞过程中，在引力作用下急剧收缩，加之</div>
<div class="t sl" style="left:32px;top:153.8px;height:20px;line-height:20px;font-size:15.3px;color:#6a6a6a;font-family:'Liberation Serif',serif;width:607px;text-align:justify;text-align-last:justify;">内部放射性元素蜕变，使原始地球不断受到加热增温；当内部温度达到足够高时，地</div>
<div class="t sl" style="left:32px;top:173.7px;height:20px;line-height:20px;font-size:15.3px;color:#6a6a6a;font-family:'Liberation Serif',serif;width:607px;text-align:justify;text-align-last:justify;">内的物质包括铁、镍等开始熔解。在重力作用下，重的下沉并趋向地心集中，形成地</div>
<div class="t sl" style="left:32px;top:193.6px;height:20px;line-height:20px;font-size:15.3px;color:#6a6a6a;font-family:'Liberation Serif',serif;width:607px;text-align:justify;text-align-last:justify;">核；轻者上浮，形成地壳和地幔。在高温下，内部的水分汽化与气体一起冲出来，飞</div>
<div class="t sl" style="left:32px;top:213.5px;height:20px;line-height:20px;font-size:15.3px;color:#6a6a6a;font-family:'Liberation Serif',serif;width:607px;text-align:justify;text-align-last:justify;">升入空中。但是由于地心的引力，它们不会跑掉，只在地球周围，成为气水合一的圈</div>
<div class="t sl" style="left:32px;top:233.4px;height:20px;line-height:20px;font-size:15.3px;color:#6a6a6a;font-family:'Liberation Serif',serif;letter-spacing:1.38px;">层。</div>
<div class="a" style="left:8.5px;top:263.3px;width:4.4px;height:4.4px;border-radius:50%;background:#777"></div>
<div class="t sl" style="left:32px;top:255.5px;height:20px;line-height:20px;font-size:15.3px;color:#6a6a6a;font-family:'Liberation Serif',serif;width:607px;text-align:justify;text-align-last:justify;">位于地表的一层地壳，在冷却凝结过程中，不断地受到地球内部剧烈运动的冲击和挤</div>
<div class="t sl" style="left:32px;top:275.5px;height:20px;line-height:20px;font-size:15.3px;color:#6a6a6a;font-family:'Liberation Serif',serif;width:607px;text-align:justify;text-align-last:justify;">压，因而变得褶皱不平，有时还会被挤破，形成地震与火山爆发，喷出岩浆与热气。</div>
<div class="t sl" style="left:32px;top:295.5px;height:20px;line-height:20px;font-size:15.3px;color:#6a6a6a;font-family:'Liberation Serif',serif;width:607px;text-align:justify;text-align-last:justify;">开始，这种情况发生频繁，后来渐渐变少，慢慢稳定下来。这种轻重物质分化，产生</div>
<div class="t sl" style="left:32px;top:315.5px;height:20px;line-height:20px;font-size:15.3px;color:#6a6a6a;font-family:'Liberation Serif',serif;letter-spacing:1.38px;">大动荡、大改组的过程，大概是在<span class=dg>45</span>亿年前完成了。</div>
<div class="a" style="left:8.5px;top:346.3px;width:4.4px;height:4.4px;border-radius:50%;background:#777"></div>
<div class="t sl" style="left:32px;top:338.5px;height:20px;line-height:20px;font-size:15.3px;color:#6a6a6a;font-family:'Liberation Serif',serif;width:607px;text-align:justify;text-align-last:justify;">地壳经过冷却定形之后，地球就像个久放而风干了的苹果，表面皱纹密布，凹凸不平。</div>
<div class="t sl" style="left:32px;top:358.5px;height:20px;line-height:20px;font-size:15.3px;color:#6a6a6a;font-family:'Liberation Serif',serif;letter-spacing:1.38px;">高山、平原、河床、海盆，各种地形一应俱全了。</div>
<div class="a" style="left:8.5px;top:389.1px;width:4.4px;height:4.4px;border-radius:50%;background:#777"></div>
<div class="t sl" style="left:32px;top:381.3px;height:20px;line-height:20px;font-size:15.3px;color:#6a6a6a;font-family:'Liberation Serif',serif;width:607px;text-align:justify;text-align-last:justify;">在很长的一个时期内，天空中水气与大气共存于一体；浓云密布，天昏地暗，随着地</div>
<div class="t sl" style="left:32px;top:401.1px;height:20px;line-height:20px;font-size:15.3px;color:#6a6a6a;font-family:'Liberation Serif',serif;width:607px;text-align:justify;text-align-last:justify;">壳逐渐冷却，大气的温度也慢慢地降低，水气以尘埃与火山灰为凝结核，变成水滴，</div>
<div class="t sl" style="left:32px;top:421.0px;height:20px;line-height:20px;font-size:15.3px;color:#6a6a6a;font-family:'Liberation Serif',serif;width:607px;text-align:justify;text-align-last:justify;">越积越多。由于冷却不均，空气对流剧烈，形成雷电狂风，暴雨浊流，雨越下越大，</div>
<div class="t sl" style="left:32px;top:440.9px;height:20px;line-height:20px;font-size:15.3px;color:#6a6a6a;font-family:'Liberation Serif',serif;width:607px;text-align:justify;text-align-last:justify;">一直下了很久很久。滔滔的洪水，通过千川万壑，汇集成巨大的水体，这就是原始的</div>
<div class="t sl" style="left:32px;top:460.7px;height:20px;line-height:20px;font-size:15.3px;color:#6a6a6a;font-family:'Liberation Serif',serif;letter-spacing:1.38px;">海洋。</div>
</div>
<div class="a" style="left:23px;top:500px;width:657px;height:491px;transform-origin:0 0;transform:scale(0.2100);overflow:hidden">
<div class="t" style="left:214px;top:34px;font-size:40px;color:#222;font-weight:bold;font-family:'Liberation Serif',serif">海和洋的区分</div>
<div class="a" style="left:14px;top:106px;width:5px;height:5px;border-radius:50%;background:#777"></div>
<div class="t" style="left:38px;top:98px;height:19px;line-height:19px;font-size:15.5px;color:#7a7a7a;font-family:'Liberation Serif',serif;width:600px;text-align:justify;text-align-last:justify;">定显心大较连洋较陆透稳盐较显透较边面稳面变流洋连积上独地影较流靠边低陆部强。</div>
<div class="t" style="left:38px;top:117px;height:19px;line-height:19px;font-size:15.5px;color:#7a7a7a;font-family:'Liberation Serif',serif;width:600px;text-align:justify;text-align-last:justify;">域球部温温陆近独分季流低统明部稳系地响积潮显低度洋温低影小中连浅浅水统连部。</div>
<div class="t" style="left:38px;top:136px;height:19px;line-height:19px;font-size:15.5px;color:#7a7a7a;font-family:'Liberation Serif',serif;width:600px;text-align:justify;text-align-last:justify;">面是有靠分中上上洋汐透响季定球立海续洋明球度部有陆面上系的强部洋洋深变流明。</div>
<div class="t" style="left:38px;top:155px;height:19px;line-height:19px;font-size:15.5px;color:#7a7a7a;font-family:'Liberation Serif',serif;width:600px;text-align:justify;text-align-last:justify;">洋季影近定独近陆变独透系洋分的是洋部阔汐度和和响水是阔是大大深独的水强深的。</div>
<div class="t" style="left:38px;top:174px;height:19px;line-height:19px;font-size:15.5px;color:#7a7a7a;font-family:'Liberation Serif',serif;">大陆独洋洋地度心立季度影定潮深近域洋潮汐度陆大的。</div>
<div class="a" style="left:14px;top:223px;width:5px;height:5px;border-radius:50%;background:#777"></div>
<div class="t" style="left:38px;top:215px;height:19px;line-height:19px;font-size:15.5px;color:#7a7a7a;font-family:'Liberation Serif',serif;width:600px;text-align:justify;text-align-last:justify;">系温度地影度中球化盐的低深响系的统心分有变影度统分有分度部球部面度海浅节近。</div>
<div class="t" style="left:38px;top:234px;height:19px;line-height:19px;font-size:15.5px;color:#7a7a7a;font-family:'Liberation Serif',serif;width:600px;text-align:justify;text-align-last:justify;">明度球深变小显系稳连小中受上球节度近低广洋浅中大季独定是化明部广的系心大显。</div>
<div class="t" style="left:38px;top:253px;height:19px;line-height:19px;font-size:15.5px;color:#7a7a7a;font-family:'Liberation Serif',serif;width:600px;text-align:justify;text-align-last:justify;">浅阔和度度中明中大定响心海水低缘广影受影化变靠广较潮海阔心上中广连浅球水节。</div>
<div class="t" style="left:38px;top:272px;height:19px;line-height:19px;font-size:15.5px;color:#7a7a7a;font-family:'Liberation Serif',serif;width:600px;text-align:justify;text-align-last:justify;">季水的积的续统流流独强陆盐汐靠中心明海洋的度水上大深显洋上近广大温的分分深。</div>
<div class="t" style="left:38px;top:291px;height:19px;line-height:19px;font-size:15.5px;color:#7a7a7a;font-family:'Liberation Serif',serif;width:600px;text-align:justify;text-align-last:justify;">是受温明影续靠度靠心地潮大明陆中度中化洋洋的度明洋海较分定流上化水度域洋水。</div>
<div class="t" style="left:38px;top:310px;height:19px;line-height:19px;font-size:15.5px;color:#7a7a7a;font-family:'Liberation Serif',serif;width:600px;text-align:justify;text-align-last:justify;">地系中地的浅小独水球度节化定洋透域透阔透潮度深续定深受深边大大边统明分的洋。</div>
<div class="t" style="left:38px;top:329px;height:19px;line-height:19px;font-size:15.5px;color:#7a7a7a;font-family:'Liberation Serif',serif;width:600px;text-align:justify;text-align-last:justify;">季定部积分度变浅面缘面积域温浅变陆深部影度分节的稳明有部影温立是影浅洋度水。</div>
<div class="t" style="left:38px;top:348px;height:19px;line-height:19px;font-size:15.5px;color:#7a7a7a;font-family:'Liberation Serif',serif;width:600px;text-align:justify;text-align-last:justify;">度强定潮浅分分浅和度明地浅续缘上度稳定连温大定盐陆部深球大大上的深靠水的中。</div>
<div class="t" style="left:38px;top:367px;height:19px;line-height:19px;font-size:15.5px;color:#7a7a7a;font-family:'Liberation Serif',serif;width:600px;text-align:justify;text-align-last:justify;">水陆有球和地系海地汐汐近洋水续和水边心显的中响续近的陆化大域化大大地有陆洋。</div>
<div class="t" style="left:38px;top:386px;height:19px;line-height:19px;font-size:15.5px;color:#7a7a7a;font-family:'Liberation Serif',serif;width:600px;text-align:justify;text-align-last:justify;">系度明化的温节和阔有度深面水大深中洋明分汐分明独深深浅立水连洋深透显低边和。</div>
<div class="t" style="left:38px;top:405px;height:19px;line-height:19px;font-size:15.5px;color:#7a7a7a;font-family:'Liberation Serif',serif;width:600px;text-align:justify;text-align-last:justify;">域影影流广部上浅季影受节和汐缘地显连和温的面影域的度的深盐度分边心分边盐显。</div>
<div class="t" style="left:38px;top:424px;height:19px;line-height:19px;font-size:15.5px;color:#7a7a7a;font-family:'Liberation Serif',serif;width:600px;text-align:justify;text-align-last:justify;">化大度水度大大有地陆部流的透立温化独浅地盐海洋稳水水化深度盐化温球季陆的度。</div>
<div class="t" style="left:38px;top:443px;height:19px;line-height:19px;font-size:15.5px;color:#7a7a7a;font-family:'Liberation Serif',serif;">小面部度水广地强稳季续温明是系潮汐统部的球的系和。</div>
</div>
<svg class="ic" style="left:79px;top:626px" width="14" height="14"><path d="M7 0V14M0 7H14" stroke="#5a6070" stroke-width="1.5"/></svg>

<div class="a" style="left:242px;top:117px;width:657px;height:491px;background:linear-gradient(#fdfefe 0%,#eef6f7 50%,#e2f0f1 100%);box-shadow:0 1px 4px 1px rgba(0,0,0,.13)">
<div class="t" style="left:228px;top:39px;font-size:40px;color:#333;font-weight:normal;font-family:'Liberation Serif',serif">海洋的形成</div>
<div class="a" style="left:8.5px;top:101.9px;width:4.4px;height:4.4px;border-radius:50%;background:#555"></div>
<div class="t sl" style="left:32px;top:94.1px;height:20px;line-height:20px;font-size:15.3px;color:#8a8a8a;font-family:'Liberation Serif',serif;width:607px;text-align:justify;text-align-last:justify;">现在的研究证明，大约在<span class=dg>50</span>亿年前，从太阳星云中分离出一些大大小小的星云团块。</div>
<div class="t sl" style="left:32px;top:114.0px;height:20px;line-height:20px;font-size:15.3px;color:#8a8a8a;font-family:'Liberation Serif',serif;width:607px;text-align:justify;text-align-last:justify;">它们一边绕太阳旋转，一边自转。在运动过程中，互相碰撞，有些团块彼此结合，由</div>
<div class="t sl" style="left:32px;top:133.9px;height:20px;line-height:20px;font-size:15.3px;color:#8a8a8a;font-family:'Liberation Serif',serif;width:607px;text-align:justify;text-align-last:justify;">小变大，逐渐成为原始的地球。星云团块碰撞过程中，在引力作用下急剧收缩，加之</div>
<div class="t sl" style="left:32px;top:153.8px;height:20px;line-height:20px;font-size:15.3px;color:#8a8a8a;font-family:'Liberation Serif',serif;width:607px;text-align:justify;text-align-last:justify;">内部放射性元素蜕变，使原始地球不断受到加热增温；当内部温度达到足够高时，地</div>
<div class="t sl" style="left:32px;top:173.7px;height:20px;line-height:20px;font-size:15.3px;color:#8a8a8a;font-family:'Liberation Serif',serif;width:607px;text-align:justify;text-align-last:justify;">内的物质包括铁、镍等开始熔解。在重力作用下，重的下沉并趋向地心集中，形成地</div>
<div class="t sl" style="left:32px;top:193.6px;height:20px;line-height:20px;font-size:15.3px;color:#8a8a8a;font-family:'Liberation Serif',serif;width:607px;text-align:justify;text-align-last:justify;">核；轻者上浮，形成地壳和地幔。在高温下，内部的水分汽化与气体一起冲出来，飞</div>
<div class="t sl" style="left:32px;top:213.5px;height:20px;line-height:20px;font-size:15.3px;color:#8a8a8a;font-family:'Liberation Serif',serif;width:607px;text-align:justify;text-align-last:justify;">升入空中。但是由于地心的引力，它们不会跑掉，只在地球周围，成为气水合一的圈</div>
<div class="t sl" style="left:32px;top:233.4px;height:20px;line-height:20px;font-size:15.3px;color:#8a8a8a;font-family:'Liberation Serif',serif;letter-spacing:1.38px;">层。</div>
<div class="a" style="left:8.5px;top:263.3px;width:4.4px;height:4.4px;border-radius:50%;background:#555"></div>
<div class="t sl" style="left:32px;top:255.5px;height:20px;line-height:20px;font-size:15.3px;color:#8a8a8a;font-family:'Liberation Serif',serif;width:607px;text-align:justify;text-align-last:justify;">位于地表的一层地壳，在冷却凝结过程中，不断地受到地球内部剧烈运动的冲击和挤</div>
<div class="t sl" style="left:32px;top:275.5px;height:20px;line-height:20px;font-size:15.3px;color:#8a8a8a;font-family:'Liberation Serif',serif;width:607px;text-align:justify;text-align-last:justify;">压，因而变得褶皱不平，有时还会被挤破，形成地震与火山爆发，喷出岩浆与热气。</div>
<div class="t sl" style="left:32px;top:295.5px;height:20px;line-height:20px;font-size:15.3px;color:#8a8a8a;font-family:'Liberation Serif',serif;width:607px;text-align:justify;text-align-last:justify;">开始，这种情况发生频繁，后来渐渐变少，慢慢稳定下来。这种轻重物质分化，产生</div>
<div class="t sl" style="left:32px;top:315.5px;height:20px;line-height:20px;font-size:15.3px;color:#8a8a8a;font-family:'Liberation Serif',serif;letter-spacing:1.38px;">大动荡、大改组的过程，大概是在<span class=dg>45</span>亿年前完成了。</div>
<div class="a" style="left:8.5px;top:346.3px;width:4.4px;height:4.4px;border-radius:50%;background:#555"></div>
<div class="t sl" style="left:32px;top:338.5px;height:20px;line-height:20px;font-size:15.3px;color:#8a8a8a;font-family:'Liberation Serif',serif;width:607px;text-align:justify;text-align-last:justify;">地壳经过冷却定形之后，地球就像个久放而风干了的苹果，表面皱纹密布，凹凸不平。</div>
<div class="t sl" style="left:32px;top:358.5px;height:20px;line-height:20px;font-size:15.3px;color:#8a8a8a;font-family:'Liberation Serif',serif;letter-spacing:1.38px;">高山、平原、河床、海盆，各种地形一应俱全了。</div>
<div class="a" style="left:8.5px;top:389.1px;width:4.4px;height:4.4px;border-radius:50%;background:#555"></div>
<div class="t sl" style="left:32px;top:381.3px;height:20px;line-height:20px;font-size:15.3px;color:#8a8a8a;font-family:'Liberation Serif',serif;width:607px;text-align:justify;text-align-last:justify;">在很长的一个时期内，天空中水气与大气共存于一体；浓云密布，天昏地暗，随着地</div>
<div class="t sl" style="left:32px;top:401.1px;height:20px;line-height:20px;font-size:15.3px;color:#8a8a8a;font-family:'Liberation Serif',serif;width:607px;text-align:justify;text-align-last:justify;">壳逐渐冷却，大气的温度也慢慢地降低，水气以尘埃与火山灰为凝结核，变成水滴，</div>
<div class="t sl" style="left:32px;top:421.0px;height:20px;line-height:20px;font-size:15.3px;color:#8a8a8a;font-family:'Liberation Serif',serif;width:607px;text-align:justify;text-align-last:justify;">越积越多。由于冷却不均，空气对流剧烈，形成雷电狂风，暴雨浊流，雨越下越大，</div>
<div class="t sl" style="left:32px;top:440.9px;height:20px;line-height:20px;font-size:15.3px;color:#8a8a8a;font-family:'Liberation Serif',serif;width:607px;text-align:justify;text-align-last:justify;">一直下了很久很久。滔滔的洪水，通过千川万壑，汇集成巨大的水体，这就是原始的</div>
<div class="t sl" style="left:32px;top:460.7px;height:20px;line-height:20px;font-size:15.3px;color:#8a8a8a;font-family:'Liberation Serif',serif;letter-spacing:1.38px;">海洋。</div>
</div>

<!-- ===== SCROLL + RIGHT PANEL ===== -->
<div class="a" style="left:1003px;top:103px;width:12px;height:544px;background:#e9ebef"></div>
<svg class="ic" style="left:1005px;top:110px" width="8" height="5"><path d="M1 4L4 1L7 4Z" fill="#7d8aa6"/></svg>
<div class="a" style="left:1004px;top:346px;width:10px;height:300px;border-radius:5px;background:#d5d8de"></div>
<div class="a" style="left:1015px;top:103px;width:216px;height:544px;background:#f4f5f7"></div>
<div class="t" style="left:1021px;top:110px;color:#444">对象属性<span class="dd">▼</span></div>
<svg class="ic" style="left:1194px;top:108px" width="14" height="14"><path d="M4 1H10L9 6L12 9H2L5 6Z M7 9V13" fill="none" stroke="#555" stroke-width="1.1"/></svg>
<svg class="ic" style="left:1215px;top:110px" width="10" height="10"><path d="M1 1L9 9M9 1L1 9" stroke="#555" stroke-width="1.2"/></svg>
<svg class="ic" style="left:1028px;top:128px" width="19" height="18"><path d="M1 10L7.5 3.5L14 9L8 16Z" fill="none" stroke="#444" stroke-width="1.1"/><path d="M4.5 6.5Q8 0 12 4" fill="none" stroke="#444" stroke-width="1.1"/><rect x="15" y="6" width="2" height="11" rx="1" fill="#7aa2ea"/></svg>
<div class="t" style="left:1027px;top:152px;color:#e8643a">填充</div>
<div class="a" style="left:1023px;top:168px;width:201px;height:1px;background:#e3e5e8"></div>
<div class="a" style="left:1023px;top:167px;width:27px;height:2px;background:#e8643a"></div>
<svg class="ic" style="left:1024px;top:188px" width="6" height="6"><path d="M0 6H6V0Z" fill="#e8643a"/></svg>
<div class="t" style="left:1032px;top:187px;color:#e8643a">填充</div>
<div class="a" style="left:1127px;top:183px;width:91px;height:20px;border:1px solid #e0e2e6;background:#fff;border-radius:2px"></div>
<div class="a" style="left:1129px;top:185px;width:77px;height:16px;background:linear-gradient(#f6fbfb,#dcefef)"></div>
<div class="t" style="left:1208px;top:190px;font-size:6px;color:#666">▼</div>
<div class="a" style="left:1032px;top:213.3px;width:11px;height:11px;border-radius:50%;border:1px solid #b8bcc4;background:#fff"></div>
<div class="t" style="left:1046px;top:213.3px;color:#444">纯色填充(<u>S</u>)</div>
<div class="a" style="left:1032px;top:232.4px;width:11px;height:11px;border-radius:50%;border:1px solid #b8bcc4;background:#fff"></div>
<div class="a" style="left:1035px;top:235.4px;width:5px;height:5px;border-radius:50%;background:#222"></div>
<div class="t" style="left:1046px;top:232.4px;color:#444">渐变填充(<u>G</u>)</div>
<div class="a" style="left:1032px;top:252.0px;width:11px;height:11px;border-radius:50%;border:1px solid #b8bcc4;background:#fff"></div>
<div class="t" style="left:1046px;top:252.0px;color:#444">图片或纹理填充(<u>P</u>)</div>
<div class="a" style="left:1032px;top:271.1px;width:11px;height:11px;border-radius:50%;border:1px solid #b8bcc4;background:#fff"></div>
<div class="t" style="left:1046px;top:271.1px;color:#444">图案填充(<u>A</u>)</div>

<div class="a" style="left:1032px;top:290px;width:11px;height:11px;border:1px solid #b8bcc4;background:#fff;border-radius:1px"></div>
<div class="t" style="left:1046px;top:290.5px;color:#444">隐藏背景图形(<u>H</u>)</div>
<div class="t" style="left:1031px;top:329px;color:#444">渐变样式(R)</div>
<div class="a" style="left:1138px;top:325px;width:18px;height:17px;border:1px solid #c9cdd3;background:#e4e6ea"><div style="margin:2px;width:12px;height:11px;background:linear-gradient(135deg,#f0f0f0,#9a9a9a)"></div></div>
<div class="a" style="left:1160px;top:325px;width:17px;height:17px;border:1px solid #e0e2e6;background:#fff"><div style="margin:2px;width:11px;height:11px;background:radial-gradient(#eee,#999)"></div></div>
<div class="a" style="left:1181px;top:325px;width:17px;height:17px;border:1px solid #e0e2e6;background:#fff"><div style="margin:2px;width:11px;height:11px;background:radial-gradient(#ccc 20%,#777)"></div></div>
<div class="a" style="left:1202px;top:325px;width:17px;height:17px;border:1px solid #e0e2e6;background:#fff"><div style="margin:2px;width:11px;height:11px;background:linear-gradient(45deg,#eee,#777)"></div></div>
<div class="t" style="left:1031px;top:353.5px;color:#444">角度(E)</div>
<div class="a" style="left:1121px;top:350.5px;width:17px;height:17px;border-radius:50%;border:1px solid #888;background:linear-gradient(#fff,#e8e8e8)"></div>
<div class="a" style="left:1132px;top:358px;width:3px;height:3px;border-radius:50%;border:1px solid #999"></div>
<div class="a" style="left:1144px;top:350.5px;width:75px;height:17px;border:1px solid #e0e2e6;background:#fff;border-radius:2px"></div>
<div class="sep" style="left:1163px;top:351px;height:15px;background:#e6e8eb"></div>
<div class="sep" style="left:1199px;top:351px;height:15px;background:#e6e8eb"></div>
<div class="t" style="left:1151px;top:353.5px;color:#444">−</div>
<div class="t" style="left:1166px;top:353.5px;color:#333">90.0°</div>
<div class="t" style="left:1205px;top:353px;color:#444;font-size:12px">+</div>
<div class="a" style="left:1037px;top:375px;width:127px;height:11px;border:1px solid #d6d9de;background:linear-gradient(90deg,#f8fcfc,#dff0f0)"></div>
<svg class="ic" style="left:1030px;top:378px" width="140" height="16"><g stroke="#9aa0a8"><path d="M7 1L12 5V14H2V5Z" fill="#fff"/><path d="M100.5 7L104.5 10V15H96.5V10Z" fill="#eef6f6"/><path d="M112 7L116 10V15H108V10Z" fill="#eaf4f4"/><path d="M133.5 7L137.5 10V15H129.5V10Z" fill="#e4f1f1"/></g></svg>
<div class="a" style="left:1174px;top:374.5px;width:20px;height:19px;border:1px solid #e0e2e6;background:#fff"></div>
<svg class="ic" style="left:1179px;top:377px" width="11" height="13"><path d="M4 1L7 3V10H1V3Z" fill="#888"/><path d="M8 7V12M5.5 9.5H10.5" stroke="#2aa02a" stroke-width="1.6"/></svg>
<div class="a" style="left:1199px;top:374.5px;width:20px;height:19px;border:1px solid #e0e2e6;background:#fff"></div>
<svg class="ic" style="left:1204px;top:377px" width="11" height="13"><path d="M4 1L7 3V10H1V3Z" fill="#aaa"/><path d="M6 8L10 12M10 8L6 12" stroke="#e03030" stroke-width="1.2"/></svg>
<div class="t" style="left:1038px;top:402.5px;color:#444">色标颜色(C)</div>
<div class="a" style="left:1160px;top:399.5px;width:58px;height:16px;border:1px solid #e0e2e6;background:#fff;border-radius:2px"></div>
<div class="t" style="left:1210px;top:405px;font-size:5px;color:#777">▼</div>
<div class="t" style="left:1038px;top:427px;color:#444">透明度(T)</div>
<div class="t" style="left:1145px;top:421px;color:#444;font-size:10px">0%</div>
<div class="a" style="left:1130px;top:426px;width:14px;height:14px;border-radius:50%;border:1px solid #888;background:#fff"></div>
<div class="a" style="left:1204px;top:426px;width:14px;height:14px;border-radius:50%;border:1px solid #888;background:#fff"></div>

<!-- sidebar -->
<div class="a" style="left:1231px;top:103px;width:36px;height:571px;background:#f4f5f7;border-left:1px solid #e2e4e8"></div>
<div class="a" style="left:1240px;top:112px;width:17px;height:1px;background:#c9ccd2"></div>
<div class="a" style="left:1240px;top:115px;width:17px;height:1px;background:#c9ccd2"></div>
<svg class="ic" style="left:1241px;top:130px" width="15" height="15"><path d="M5 10A8 8 0 0 1 13 2A8 8 0 0 1 5 10Z M5 10L3 8L1 8L4 5L7 5 M5 10L7 12L7 14L10 11L10 8" fill="none" stroke="#555d6c" stroke-width="1.1"/><circle cx="9.5" cy="5.5" r="1.3" fill="none" stroke="#555d6c"/></svg>
<div class="a" style="left:1235px;top:155px;width:27px;height:27px;border-radius:2px;background:#dde0e5"></div>
<svg class="ic" style="left:1241px;top:161px" width="15" height="14"><path d="M4 3H14M1 10H11" stroke="#555d6c" stroke-width="1.1"/><circle cx="3" cy="3" r="2" fill="#dde0e5" stroke="#555d6c" stroke-width="1.1"/><circle cx="12" cy="10" r="2" fill="#dde0e5" stroke="#555d6c" stroke-width="1.1"/></svg>
<svg class="ic" style="left:1241px;top:190px" width="15" height="15"><path d="M7.5 1L9.5 5.5L14 6L10.5 9L11.5 14L7.5 11.5L3.5 14L4.5 9L1 6L5.5 5.5Z" fill="none" stroke="#555d6c" stroke-width="1.1"/></svg>
<svg class="ic" style="left:1241px;top:220px" width="15" height="15"><path d="M3 4V1H14V11H11M1 4H11V14H1Z M4 10L6 8L8 10" fill="none" stroke="#555d6c" stroke-width="1.1"/></svg>
<svg class="ic" style="left:1241px;top:250px" width="15" height="15"><circle cx="7.5" cy="7.5" r="6.5" fill="none" stroke="#555d6c" stroke-width="1.1"/><path d="M5.5 5.5A2 2 0 1 1 7.5 8V9.5" fill="none" stroke="#555d6c" stroke-width="1.1"/><circle cx="7.5" cy="11.3" r=".7" fill="#555d6c"/></svg>
<svg class="ic" style="left:1241px;top:279px" width="15" height="15"><path d="M8 13H1V1H14V7" fill="none" stroke="#555d6c" stroke-width="1.1"/><path d="M3 9L6 6L8 8" fill="none" stroke="#555d6c"/><circle cx="11" cy="11" r="3" fill="none" stroke="#555d6c"/></svg>
<svg class="ic" style="left:1241px;top:309px" width="15" height="15"><circle cx="7.5" cy="7.5" r="6.5" fill="none" stroke="#555d6c" stroke-width="1.1"/><path d="M8.5 3L5 8H10L6.5 12" fill="none" stroke="#555d6c" stroke-width="1.1"/></svg>

<!-- ===== NOTES / STATUS / TASKBAR ===== -->
<div class="a" style="left:178px;top:624px;width:825px;height:23px;background:#e9e9e9"></div>
<svg class="ic" style="left:183px;top:629px" width="14" height="12"><path d="M0 1H13M0 5H13M0 9H8M11 8V12M9 10H13" stroke="#666" stroke-width="1.1"/></svg>
<div class="t" style="left:202px;top:629px;color:#555;font-size:11px">单击此处添加备注</div>
<div class="a" style="left:0;top:647px;width:1267px;height:27px;background:#f9fafb;border-top:1px solid #eaebed"></div>
<div class="t" style="left:4px;top:656px;color:#444">幻灯片 3 / 4</div>
<div class="sep" style="left:66px;top:653px;height:14px;background:#e3e5e8"></div>
<div class="t" style="left:75px;top:656px;color:#444">默认设计模板</div>
<div class="sep" style="left:143px;top:653px;height:14px;background:#e3e5e8"></div>
<div class="a" style="left:0;top:674px;width:1267px;height:40px;background:linear-gradient(90deg,#d3dae6,#d9e0ea 40%,#d6dde8)"></div>
<svg class="ic" style="left:14px;top:685px" width="18" height="18"><defs><radialGradient id="mg" cx="60%" cy="70%"><stop offset="0" stop-color="#ffe85a"/><stop offset="1" stop-color="#f0a800"/></radialGradient><mask id="mm"><rect width="18" height="18" fill="#fff"/><circle cx="5" cy="4.5" r="7.2" fill="#000"/></mask></defs><circle cx="9.5" cy="9" r="7.5" fill="url(#mg)" mask="url(#mm)"/></svg>
<div class="t" style="left:39px;top:682px;color:#333;font-size:10px">25°C</div>
<div class="t" style="left:39px;top:696px;color:#444">晴朗</div>
<svg class="ic" style="left:440px;top:685px" width="19" height="19"><g fill="#1e90e0"><rect x="0" y="0" width="9" height="9" fill="#36a9f0"/><rect x="10" y="0" width="9" height="9" fill="#2a9ae8"/><rect x="0" y="10" width="9" height="9" fill="#1a86d8"/><rect x="10" y="10" width="9" height="9" fill="#1478d0"/></g></svg>
<svg class="ic" style="left:477px;top:685px" width="19" height="19"><circle cx="11" cy="8" r="6.5" fill="none" stroke="#1b1b1b" stroke-width="2"/><path d="M6.5 12.5L1.5 17.5" stroke="#1b1b1b" stroke-width="2.3"/></svg>
<svg class="ic" style="left:513px;top:685px" width="20" height="19"><rect x="6" y="0" width="14" height="12" fill="#f4f4f4" stroke="#e0e0e0"/><rect x="0" y="6" width="14" height="13" fill="#222"/><rect x="6" y="6" width="8" height="6" fill="#999"/></svg>
<svg class="ic" style="left:549px;top:685px" width="20" height="19"><path d="M0 1H7L9 3H20V19H0Z" fill="#f2b90c"/><rect x="0" y="4" width="20" height="15" fill="#ffd24a"/><rect x="5" y="13" width="10" height="4" rx="1" fill="#1a7ad8"/></svg>
<svg class="ic" style="left:584px;top:685px" width="8" height="19"><path d="M1 4L8 1V19H1Z" fill="#2a9ae8"/><path d="M1 4L8 1V6Z" fill="#0e5ea8"/><path d="M2 6L8 4V9Z" fill="#fff" opacity=".9"/></svg>

<!-- ===== QQ WINDOW ===== -->
<div class="a" style="left:591px;top:431px;width:680px;height:290px;background:#323538;box-shadow:0 0 4px 1px rgba(0,0,0,.28)"></div>
<div class="a" style="left:591px;top:431px;width:676px;height:27px;background:#2789dd"></div>
<svg class="ic" style="left:597px;top:435px" width="15" height="17"><defs><radialGradient id="wc" cx="40%" cy="35%"><stop offset="0" stop-color="#fff"/><stop offset=".7" stop-color="#e8e8e8"/><stop offset="1" stop-color="#9aa"/></radialGradient></defs><ellipse cx="7.5" cy="14" rx="5" ry="2.6" fill="#c8965a"/><ellipse cx="7.5" cy="12.8" rx="4.5" ry="1.8" fill="#e8c08a"/><circle cx="7.5" cy="7" r="6.5" fill="url(#wc)"/><circle cx="7.5" cy="6.5" r="3.2" fill="#1e4f8e"/><circle cx="6.5" cy="5.5" r="1" fill="#8ab4e8"/></svg>
<div class="t" style="left:616px;top:439px;color:#fff;font-size:10px">QQ电话&nbsp;&nbsp;-&nbsp;&nbsp;21职业经理专科一班 内部群</div>
<div class="a" style="left:1207px;top:446px;width:8px;height:2px;background:#fff"></div>
<div class="a" style="left:1231px;top:441px;width:9px;height:7px;border:2px solid #fff"></div>
<svg class="ic" style="left:1255px;top:440px" width="9" height="9"><path d="M1 1L8 8M8 1L1 8" stroke="#fff" stroke-width="1.6"/></svg>
<div class="a" style="left:591px;top:458px;width:432px;height:256px;background:#323538"></div>
<div class="a" style="left:1023px;top:458px;width:244px;height:256px;background:#f0f0f0"></div>
<div class="t" style="left:1031px;top:461px;color:#333;font-size:10px">群成员 31/32</div>
<svg class="ic" style="left:1053px;top:486.3px" width="13" height="13"><defs><clipPath id="cp0"><circle cx="6.5" cy="6.5" r="6.5"/></clipPath></defs><g clip-path="url(#cp0)"><rect width="13" height="13" fill="#3a3528"/><ellipse cx="8" cy="5" rx="3.5" ry="4" fill="#c9a07a"/><ellipse cx="5" cy="10" rx="3" ry="3" fill="#5a6a7a"/></g></svg>
<div class="a" style="left:1061px;top:493.6px;width:6px;height:6px;background:#3a90f0;border:1px solid #e8eef6"></div>
<div class="t" style="left:1068px;top:486.8px;color:#1a1a1a;font-size:10px">孟相荣</div>
<svg class="ic" style="left:1233px;top:486.8px" width="12" height="12"><rect x="3.5" y="0.5" width="4.5" height="7" rx="2.2" fill="#8a8a8a"/><path d="M2 5A3.8 3.8 0 0 0 9.5 5M5.8 9V11.5" fill="none" stroke="#8a8a8a"/><path d="M1 1L11 11" stroke="#e83a6a" stroke-width="1.3"/></svg>
<svg class="ic" style="left:1053px;top:509.4px" width="13" height="13"><defs><clipPath id="cp1"><circle cx="6.5" cy="6.5" r="6.5"/></clipPath></defs><g clip-path="url(#cp1)"><rect width="13" height="13" fill="#6aa86a"/><ellipse cx="5" cy="6" rx="3.5" ry="3" fill="#f0f0f0"/><ellipse cx="8" cy="8" rx="2" ry="2" fill="#c8d0e0"/></g></svg>
<div class="a" style="left:1061px;top:516.7px;width:6px;height:6px;background:#3a90f0;border:1px solid #e8eef6"></div>
<div class="t" style="left:1068px;top:509.9px;color:#1a1a1a;font-size:10px">邵瑞雪</div>
<svg class="ic" style="left:1233px;top:509.9px" width="12" height="12"><rect x="3.5" y="0.5" width="4.5" height="7" rx="2.2" fill="#8a8a8a"/><path d="M2 5A3.8 3.8 0 0 0 9.5 5M5.8 9V11.5" fill="none" stroke="#8a8a8a"/><path d="M1 1L11 11" stroke="#e83a6a" stroke-width="1.3"/></svg>
<svg class="ic" style="left:1053px;top:532.6px" width="13" height="13"><defs><clipPath id="cp2"><circle cx="6.5" cy="6.5" r="6.5"/></clipPath></defs><g clip-path="url(#cp2)"><rect width="13" height="13" fill="#8a8a88"/><ellipse cx="6" cy="3" rx="5" ry="2.5" fill="#d8d8d0"/><ellipse cx="5" cy="9" rx="3" ry="3" fill="#3a3a3a"/></g></svg>
<div class="a" style="left:1061px;top:539.9px;width:6px;height:6px;background:#3a90f0;border:1px solid #e8eef6"></div>
<div class="t" style="left:1068px;top:533.1px;color:#1a1a1a;font-size:10px">孙钧政</div>
<svg class="ic" style="left:1233px;top:533.1px" width="12" height="12"><rect x="3.5" y="0.5" width="4.5" height="7" rx="2.2" fill="#8a8a8a"/><path d="M2 5A3.8 3.8 0 0 0 9.5 5M5.8 9V11.5" fill="none" stroke="#8a8a8a"/><path d="M1 1L11 11" stroke="#e83a6a" stroke-width="1.3"/></svg>
<svg class="ic" style="left:1053px;top:555.7px" width="13" height="13"><defs><clipPath id="cp3"><circle cx="6.5" cy="6.5" r="6.5"/></clipPath></defs><g clip-path="url(#cp3)"><rect width="13" height="13" fill="#2a2a48"/><ellipse cx="7" cy="6" rx="2" ry="4" fill="#e8e8f0"/><ellipse cx="5" cy="5" rx="2" ry="2" fill="#9a8ac8"/></g></svg>
<div class="a" style="left:1061px;top:563.0px;width:6px;height:6px;background:#3a90f0;border:1px solid #e8eef6"></div>
<div class="t" style="left:1068px;top:556.2px;color:#1a1a1a;font-size:10px">徐梦婷</div>
<svg class="ic" style="left:1233px;top:556.2px" width="12" height="12"><rect x="3.5" y="0.5" width="4.5" height="7" rx="2.2" fill="#8a8a8a"/><path d="M2 5A3.8 3.8 0 0 0 9.5 5M5.8 9V11.5" fill="none" stroke="#8a8a8a"/><path d="M1 1L11 11" stroke="#e83a6a" stroke-width="1.3"/></svg>
<svg class="ic" style="left:1053px;top:578.8px" width="13" height="13"><defs><clipPath id="cp4"><circle cx="6.5" cy="6.5" r="6.5"/></clipPath></defs><g clip-path="url(#cp4)"><rect width="13" height="13" fill="#c8c4c0"/><ellipse cx="6" cy="5" rx="4" ry="4" fill="#e0dcd8"/><ellipse cx="5" cy="6" rx="1" ry="1.5" fill="#d03030"/></g></svg>
<div class="a" style="left:1061px;top:586.1px;width:6px;height:6px;background:#3a90f0;border:1px solid #e8eef6"></div>
<div class="t" style="left:1068px;top:579.3px;color:#1a1a1a;font-size:10px">杨亚宁</div>
<svg class="ic" style="left:1233px;top:579.3px" width="12" height="12"><rect x="3.5" y="0.5" width="4.5" height="7" rx="2.2" fill="#8a8a8a"/><path d="M2 5A3.8 3.8 0 0 0 9.5 5M5.8 9V11.5" fill="none" stroke="#8a8a8a"/><path d="M1 1L11 11" stroke="#e83a6a" stroke-width="1.3"/></svg>
<svg class="ic" style="left:1053px;top:602.0px" width="13" height="13"><defs><clipPath id="cp5"><circle cx="6.5" cy="6.5" r="6.5"/></clipPath></defs><g clip-path="url(#cp5)"><rect width="13" height="13" fill="#181818"/><ellipse cx="6" cy="8" rx="3.5" ry="3" fill="#e0e0d8"/><ellipse cx="9" cy="5" rx="2" ry="2" fill="#fafafa"/></g></svg>
<div class="a" style="left:1061px;top:609.3px;width:6px;height:6px;background:#3a90f0;border:1px solid #e8eef6"></div>
<div class="t" style="left:1068px;top:602.5px;color:#1a1a1a;font-size:10px">仪欣萍</div>
<svg class="ic" style="left:1233px;top:602.5px" width="12" height="12"><rect x="3.5" y="0.5" width="4.5" height="7" rx="2.2" fill="#8a8a8a"/><path d="M2 5A3.8 3.8 0 0 0 9.5 5M5.8 9V11.5" fill="none" stroke="#8a8a8a"/><path d="M1 1L11 11" stroke="#e83a6a" stroke-width="1.3"/></svg>
<svg class="ic" style="left:1053px;top:625.1px" width="13" height="13"><defs><clipPath id="cp6"><circle cx="6.5" cy="6.5" r="6.5"/></clipPath></defs><g clip-path="url(#cp6)"><rect width="13" height="13" fill="#c8b040"/><ellipse cx="7" cy="6" rx="3.5" ry="5" fill="#2a2a2a"/><ellipse cx="5" cy="8" rx="2" ry="2" fill="#f0e8d0"/></g></svg>
<div class="a" style="left:1061px;top:632.4px;width:6px;height:6px;background:#3a90f0;border:1px solid #e8eef6"></div>
<div class="t" style="left:1068px;top:625.6px;color:#1a1a1a;font-size:10px">张德洋</div>
<svg class="ic" style="left:1233px;top:625.6px" width="12" height="12"><rect x="3.5" y="0.5" width="4.5" height="7" rx="2.2" fill="#8a8a8a"/><path d="M2 5A3.8 3.8 0 0 0 9.5 5M5.8 9V11.5" fill="none" stroke="#8a8a8a"/><path d="M1 1L11 11" stroke="#e83a6a" stroke-width="1.3"/></svg>
<svg class="ic" style="left:1053px;top:648.2px" width="13" height="13"><defs><clipPath id="cp7"><circle cx="6.5" cy="6.5" r="6.5"/></clipPath></defs><g clip-path="url(#cp7)"><rect width="13" height="13" fill="#8a6a4a"/><ellipse cx="8" cy="9" rx="4" ry="3.5" fill="#e8a040"/><ellipse cx="5" cy="5" rx="2.5" ry="2.5" fill="#d8c0a0"/></g></svg>
<div class="t" style="left:1068px;top:648.7px;color:#1a1a1a;font-size:10px">张康宁</div>
<svg class="ic" style="left:1233px;top:648.7px" width="12" height="12"><rect x="3.5" y="0.5" width="4.5" height="7" rx="2.2" fill="#8a8a8a"/><path d="M2 5A3.8 3.8 0 0 0 9.5 5M5.8 9V11.5" fill="none" stroke="#8a8a8a"/><path d="M1 1L11 11" stroke="#e83a6a" stroke-width="1.3"/></svg>
<svg class="ic" style="left:1053px;top:671.3px" width="13" height="13"><defs><clipPath id="cp8"><circle cx="6.5" cy="6.5" r="6.5"/></clipPath></defs><g clip-path="url(#cp8)"><rect width="13" height="13" fill="#e8dcc0"/><ellipse cx="6" cy="7" rx="3" ry="5" fill="#222"/><ellipse cx="9" cy="4" rx="2" ry="2" fill="#f8f0e0"/></g></svg>
<div class="a" style="left:1061px;top:678.6px;width:6px;height:6px;background:#3a90f0;border:1px solid #e8eef6"></div>
<div class="t" style="left:1068px;top:671.8px;color:#1a1a1a;font-size:10px">张丽倩</div>
<svg class="ic" style="left:1233px;top:671.8px" width="12" height="12"><rect x="3.5" y="0.5" width="4.5" height="7" rx="2.2" fill="#8a8a8a"/><path d="M2 5A3.8 3.8 0 0 0 9.5 5M5.8 9V11.5" fill="none" stroke="#8a8a8a"/><path d="M1 1L11 11" stroke="#e83a6a" stroke-width="1.3"/></svg>
<svg class="ic" style="left:1053px;top:694.5px" width="13" height="13"><defs><clipPath id="cp9"><circle cx="6.5" cy="6.5" r="6.5"/></clipPath></defs><g clip-path="url(#cp9)"><rect width="13" height="13" fill="#0a0a10"/><ellipse cx="7" cy="8" rx="3" ry="3.5" fill="#d8d0d8"/><ellipse cx="6" cy="3" rx="4" ry="2" fill="#333"/></g></svg>
<div class="a" style="left:1061px;top:701.8px;width:6px;height:6px;background:#3a90f0;border:1px solid #e8eef6"></div>
<div class="t" style="left:1068px;top:695.0px;color:#1a1a1a;font-size:10px">张正辉</div>
<svg class="ic" style="left:1233px;top:695.0px" width="12" height="12"><rect x="3.5" y="0.5" width="4.5" height="7" rx="2.2" fill="#8a8a8a"/><path d="M2 5A3.8 3.8 0 0 0 9.5 5M5.8 9V11.5" fill="none" stroke="#8a8a8a"/><path d="M1 1L11 11" stroke="#e83a6a" stroke-width="1.3"/></svg>

<div class="a" style="left:1264px;top:651px;width:3px;height:63px;background:#c8c8c8"></div>
<div class="a" style="left:737px;top:547px;width:138px;height:80px;border:2px solid #e6e010;background:#f4f6f8"><div class="a" style="left:0;top:0;width:134px;height:12px;background:#fff"></div><div class="a" style="left:10px;top:22px;width:70px;height:50px;background:#e8f2f2"></div><div class="a" style="left:64px;top:45px;width:70px;height:4px;background:#2789dd"></div><div class="a" style="left:64px;top:49px;width:46px;height:27px;background:#323538"></div><div class="a" style="left:110px;top:49px;width:24px;height:27px;background:#eee"></div><div class="a" style="left:80px;top:55px;width:14px;height:9px;background:#fff"></div></div>
<div class="t" style="left:746px;top:637px;color:#b4b6b8;font-size:10px">对方正在观看你分享的屏幕</div>
<div class="a" style="left:765px;top:676px;width:82px;height:29px;border:1px solid #7a7c7e;border-radius:4px"></div>
<svg class="ic" style="left:778px;top:683px" width="14" height="15"><path d="M4 3.5A5.5 5.5 0 1 0 10 3.5" fill="none" stroke="#e0483a" stroke-width="1.6"/><path d="M7 1V7.5" stroke="#e0483a" stroke-width="1.6"/></svg>
<div class="t" style="left:798px;top:685px;color:#e8e8e8;font-size:10px">结束分享</div>

<!-- orange share border corners -->
<div class="a" style="left:0;top:0;width:37px;height:2px;background:#ff8000;border-radius:0 0 2px 0"></div>
<div class="a" style="left:1225px;top:0;width:42px;height:2px;background:#ff8000"></div>
<div class="a" style="left:1263px;top:0;width:4px;height:42px;background:#ff8000;border-radius:0 0 0 3px"></div>
<div class="a" style="left:0;top:711px;width:38px;height:3px;background:#ff8000;border-radius:0 3px 0 0"></div>
<div class="a" style="left:1224px;top:711px;width:43px;height:3px;background:#ff8000;border-radius:3px 0 0 0"></div>
<div class="a" style="left:1263px;top:670px;width:4px;height:44px;background:#ff8000;border-radius:3px 0 0 0"></div>

</body></html>

</div></div>
<div class="t" style="left:746px;top:637px;color:#b4b6b8;font-size:10px">对方正在观看你分享的屏幕</div>
<div class="a" style="left:765px;top:676px;width:82px;height:29px;border:1px solid #7a7c7e;border-radius:4px"></div>
<svg class="ic" style="left:778px;top:683px" width="14" height="15"><path d="M4 3.5A5.5 5.5 0 1 0 10 3.5" fill="none" stroke="#e0483a" stroke-width="1.6"/><path d="M7 1V7.5" stroke="#e0483a" stroke-width="1.6"/></svg>
<div class="t" style="left:798px;top:685px;color:#e8e8e8;font-size:10px">结束分享</div>

<!-- orange share border corners -->
<div class="a" style="left:0;top:0;width:37px;height:2px;background:#ff8000;border-radius:0 0 2px 0"></div>
<div class="a" style="left:1225px;top:0;width:42px;height:2px;background:#ff8000"></div>
<div class="a" style="left:1263px;top:0;width:4px;height:42px;background:#ff8000;border-radius:0 0 0 3px"></div>
<div class="a" style="left:0;top:711px;width:38px;height:3px;background:#ff8000;border-radius:0 3px 0 0"></div>
<div class="a" style="left:1224px;top:711px;width:43px;height:3px;background:#ff8000;border-radius:3px 0 0 0"></div>
<div class="a" style="left:1263px;top:670px;width:4px;height:44px;background:#ff8000;border-radius:3px 0 0 0"></div>

</body></html>
